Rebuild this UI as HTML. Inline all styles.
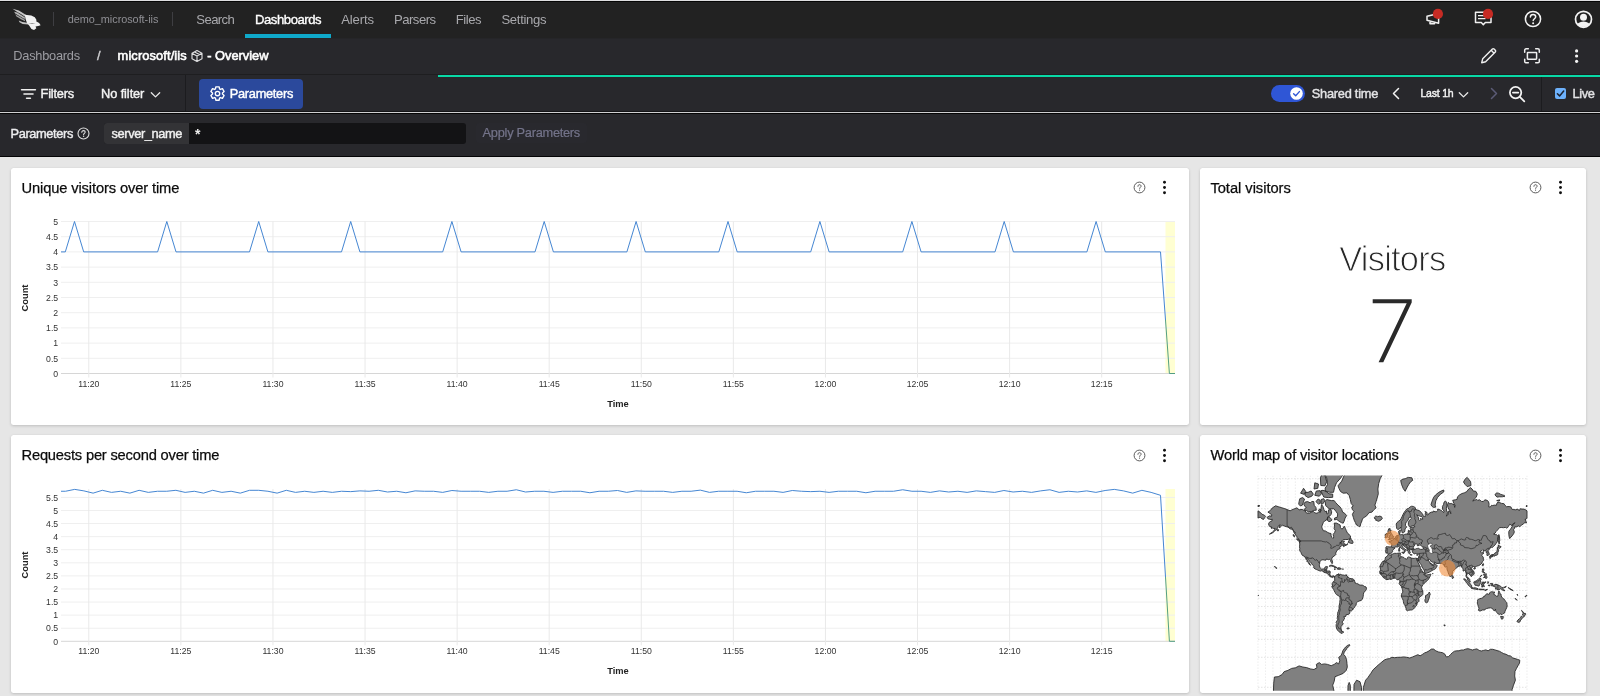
<!DOCTYPE html>
<html><head><meta charset="utf-8"><title>microsoft/iis - Overview</title>
<style>
*{box-sizing:border-box;margin:0;padding:0}
html,body{width:1600px;height:696px;overflow:hidden;background:#e6e6e6;font-family:"Liberation Sans", sans-serif;}
.abs,.t,.ic,.bar,.panel{position:absolute}
.t{white-space:nowrap;line-height:1;}
.bar{left:0;width:1600px}
.panel{background:#fff;border-radius:2.5px;box-shadow:0 1px 3px rgba(0,0,0,.17),0 0 1px rgba(0,0,0,.10)}
.ptitle{font-size:14.3px;color:#161616;letter-spacing:.1px}
svg text.tk{font-family:"Liberation Sans", sans-serif;font-size:8.7px;fill:#333}
svg text.ax{font-family:"Liberation Sans", sans-serif;font-size:9.3px;font-weight:bold;fill:#222}
.nav{font-size:13.2px;color:#a9a9ad;top:13px}
</style></head><body><div id="root" style="position:absolute;left:0;top:0;width:1600px;height:696px;will-change:transform">

<!-- ======= top nav ======= -->
<div class="bar" style="top:0;height:38px;background:#222222"></div>
<div class="bar" style="top:0;height:1px;background:#dedee0"></div>
<div class="bar" style="top:1px;height:1px;background:#060606"></div>
<div class="bar" style="top:38px;height:37px;background:#28282c"></div>
<div class="bar" style="top:38px;height:1px;background:#252528"></div>
<div class="bar" style="top:74px;height:1px;background:#1e1e20"></div>
<div class="bar" style="top:75px;height:37px;background:#28282c"></div>
<div class="bar" style="top:111px;height:1px;background:#151517"></div>
<div class="bar" style="top:112px;height:1px;background:#cfcfd1"></div>
<div class="bar" style="top:113px;height:44px;background:#28282c"></div>
<div class="bar" style="top:113px;height:1px;background:#050505"></div>
<div class="bar" style="top:156px;height:1px;background:#050506"></div>

<!-- falcon logo -->
<svg class="ic" style="left:8px;top:4px" width="40" height="30" viewBox="0 0 928 696">
<g fill="#f1f1f1">
<path d="M105 108 250 148 430 262 405 300 300 232 215 188Z" opacity=".8"/>
<path d="M140 182 215 200 395 312 385 348 265 278 170 222Z" opacity=".72"/>
<path d="M165 238 250 282 392 366 398 402 300 352 200 288Z" opacity=".62"/>
<path d="M250 382 335 420 485 440 472 474 340 466 268 422Z" opacity=".78"/>
<path d="M392 252 540 268 622 308 662 370 652 402 722 440 758 492 700 508 638 520 658 560 604 604 544 582 494 502 440 442 404 336Z"/>
</g>
<path d="M470 448 640 440 560 462Z" fill="#212123" opacity=".55"/>
</svg>
<div class="abs" style="left:53px;top:12px;width:1px;height:14px;background:#3e3e42"></div>
<div class="t" style="left:67.80px;top:14.27px;font-size:10.9px;font-weight:normal;color:#8f8f94;letter-spacing:-0.049px;">demo_microsoft-iis</div>
<div class="abs" style="left:172px;top:12px;width:1px;height:14px;background:#3e3e42"></div>

<div class="t" style="left:196.30px;top:12.51px;font-size:13.1px;font-weight:normal;color:#a9a9ad;letter-spacing:-0.583px;">Search</div>
<div class="t" style="left:255.00px;top:12.51px;font-size:13.1px;font-weight:normal;color:#ffffff;letter-spacing:-0.441px;-webkit-text-stroke:0.35px #ffffff;">Dashboards</div>
<div class="t" style="left:341.30px;top:12.51px;font-size:13.1px;font-weight:normal;color:#a9a9ad;letter-spacing:-0.164px;">Alerts</div>
<div class="t" style="left:394.00px;top:12.51px;font-size:13.1px;font-weight:normal;color:#a9a9ad;letter-spacing:-0.504px;">Parsers</div>
<div class="t" style="left:455.80px;top:12.51px;font-size:13.1px;font-weight:normal;color:#a9a9ad;letter-spacing:-0.491px;">Files</div>
<div class="t" style="left:501.40px;top:12.51px;font-size:13.1px;font-weight:normal;color:#a9a9ad;letter-spacing:-0.302px;">Settings</div>
<div class="abs" style="left:245px;top:34px;width:86px;height:4px;background:#0fa9ca"></div>

<!-- top-right icons -->
<svg class="ic" style="left:1424px;top:7px" width="22" height="22" viewBox="0 0 22 22">
<path d="M3 9.300 14.600 6.400v9.800L3 13.300z M6 14v2.700h4.500V15" fill="none" stroke="#f0f0f0" stroke-width="1.5" stroke-linejoin="round"/>
<circle cx="13.900" cy="6.900" r="5.100" fill="#c62b24"/></svg>
<svg class="ic" style="left:1472px;top:7px" width="24" height="22" viewBox="0 0 24 22">
<path d="M3.500 5.300h15.500v10.200h-5.700l-2 2.200-2-2.200H3.500z" fill="none" stroke="#f0f0f0" stroke-width="1.500" stroke-linejoin="round"/>
<path d="M6 8.600h10M6 11.600h7.500" stroke="#f0f0f0" stroke-width="1.300"/>
<circle cx="16" cy="6.900" r="5.100" fill="#c62b24"/></svg>
<svg class="ic" style="left:1523px;top:9px" width="20" height="20" viewBox="0 0 20 20">
<circle cx="10" cy="10" r="7.600" fill="none" stroke="#f4f4f4" stroke-width="1.500"/>
<path d="M7.400 8.100c0-1.600 1.200-2.600 2.700-2.600s2.600 1 2.600 2.300c0 1.900-2.500 2-2.500 3.800" fill="none" stroke="#f4f4f4" stroke-width="1.500" stroke-linecap="round"/><circle cx="10.150" cy="14.200" r="1" fill="#f4f4f4"/></svg>
<svg class="ic" style="left:1573px;top:9px" width="21" height="21" viewBox="0 0 21 21">
<defs><clipPath id="uc"><circle cx="10.500" cy="10.300" r="7.700"/></clipPath></defs>
<circle cx="10.500" cy="10.300" r="8" fill="none" stroke="#f4f4f4" stroke-width="1.700"/>
<circle cx="10.500" cy="8.200" r="3.500" fill="#f4f4f4"/>
<ellipse cx="10.500" cy="18.200" rx="7.200" ry="5.800" fill="#f4f4f4" clip-path="url(#uc)"/></svg>

<!-- ======= breadcrumb bar ======= -->
<div class="t" style="left:13.30px;top:50.16px;font-size:12.8px;font-weight:normal;color:#9d9da3;letter-spacing:-0.252px;">Dashboards</div>
<div class="t" style="left:96.90px;top:50.16px;font-size:12.8px;font-weight:normal;color:#cfcfd2;letter-spacing:0.137px;-webkit-text-stroke:0.4px #cfcfd2;">/</div>
<div class="t" style="left:117.60px;top:50.16px;font-size:12.8px;font-weight:normal;color:#ffffff;letter-spacing:0.127px;-webkit-text-stroke:0.6px #ffffff;">microsoft/iis</div>
<svg class="ic" style="left:190px;top:49px" width="14" height="14" viewBox="0 0 14 14"><path d="M7 1.500 12 4.200v5.600L7 12.500 2 9.800V4.200zM2 4.200 7 7l5-2.800M7 7v5.500M4.500 2.900l5 2.700" fill="none" stroke="#dedee0" stroke-width="1.150" stroke-linejoin="round"/></svg>
<div class="t" style="left:207.30px;top:50.16px;font-size:12.8px;font-weight:normal;color:#ffffff;letter-spacing:0.004px;-webkit-text-stroke:0.6px #ffffff;">- Overview</div>

<svg class="ic" style="left:1479px;top:46px" width="20" height="20" viewBox="0 0 20 20"><path d="M2.700 16.700l1-3.900L13.400 3.100c.5-.5 1.200-.5 1.700 0l1.200 1.200c.5.5.5 1.200 0 1.700L6.600 15.700zM12.200 4.300l2.900 2.900" fill="none" stroke="#f0f0f0" stroke-width="1.400" stroke-linejoin="round"/></svg>
<svg class="ic" style="left:1523px;top:47px" width="18" height="18" viewBox="0 0 18 18"><path d="M1.700 5.300V3.200c0-.8.600-1.400 1.400-1.400h2.200M12.700 1.800h2.200c.8 0 1.400.6 1.400 1.400v2.100M16.300 12.300v2.100c0 .8-.6 1.400-1.400 1.400h-2.200M5.300 15.800H3.100c-.8 0-1.400-.6-1.400-1.400v-2.100" fill="none" stroke="#f0f0f0" stroke-width="1.500" stroke-linecap="round" stroke-linejoin="round"/><rect x="4.400" y="5.400" width="9.200" height="6.800" rx=".6" fill="none" stroke="#f0f0f0" stroke-width="1.500"/></svg>
<svg class="ic" style="left:1574px;top:48px" width="6" height="16" viewBox="0 0 6 16"><circle cx="2.600" cy="2.900" r="1.600" fill="#f4f4f4"/><circle cx="2.600" cy="8" r="1.600" fill="#f4f4f4"/><circle cx="2.600" cy="13.300" r="1.600" fill="#f4f4f4"/></svg>

<!-- teal progress line -->
<div class="abs" style="left:438px;top:75px;width:1162px;height:2px;background:#08d8a6"></div>

<!-- ======= toolbar ======= -->
<svg class="ic" style="left:20px;top:88px" width="17" height="13" viewBox="0 0 17 13"><path d="M1.6 1.700h13.800M4 6h9M6.600 10.300h3.800" stroke="#f0f0f0" stroke-width="1.600" stroke-linecap="round"/></svg>
<div class="t" style="left:40.60px;top:88.16px;font-size:12.8px;font-weight:normal;color:#f4f4f4;letter-spacing:-0.206px;-webkit-text-stroke:0.4px #f4f4f4;">Filters</div>
<div class="t" style="left:101.00px;top:88.16px;font-size:12.8px;font-weight:normal;color:#f4f4f4;letter-spacing:-0.088px;-webkit-text-stroke:0.4px #f4f4f4;">No filter</div>
<svg class="ic" style="left:149.500px;top:90.500px" width="11" height="8" viewBox="0 0 11 8"><path d="M1.300 1.700 5.500 5.900 9.700 1.700" fill="none" stroke="#e8e8e8" stroke-width="1.300" stroke-linecap="round" stroke-linejoin="round"/></svg>
<div class="abs" style="left:185px;top:75px;width:1px;height:36px;background:#1c1c1f"></div>
<div class="abs" style="left:199px;top:78.500px;width:104px;height:30.500px;background:#2b499c;border-radius:4px"></div>
<svg class="ic" style="left:208.700px;top:85px" width="17" height="17" viewBox="0 0 17 17"><g fill="none" stroke="#fff" stroke-width="1.350" stroke-linejoin="round"><path d="M10.17 1.80 L6.83 1.80 L6.47 3.93 L5.56 4.45 L3.54 3.71 L1.87 6.60 L3.53 7.98 L3.53 9.02 L1.87 10.40 L3.54 13.29 L5.56 12.55 L6.47 13.07 L6.83 15.20 L10.17 15.20 L10.53 13.07 L11.44 12.55 L13.46 13.29 L15.13 10.40 L13.47 9.02 L13.47 7.98 L15.13 6.60 L13.46 3.71 L11.44 4.45 L10.53 3.93Z"/><circle cx="8.500" cy="8.500" r="2.200"/></g></svg>
<div class="t" style="left:229.80px;top:88.16px;font-size:12.8px;font-weight:normal;color:#ffffff;letter-spacing:-0.294px;-webkit-text-stroke:0.4px #ffffff;">Parameters</div>

<!-- toggle -->
<div class="abs" style="left:1271px;top:85px;width:34px;height:17px;border-radius:9px;background:#2f56d6"></div>
<svg class="ic" style="left:1289px;top:86px" width="15" height="15" viewBox="0 0 15 15"><circle cx="7.500" cy="7.500" r="6.300" fill="#fff"/><path d="M4.600 7.700 6.700 9.700 10.400 5.600" fill="none" stroke="#2f56d6" stroke-width="1.400" stroke-linecap="round" stroke-linejoin="round"/></svg>
<div class="t" style="left:1311.80px;top:88.16px;font-size:12.8px;font-weight:normal;color:#e4e4e6;letter-spacing:-0.255px;-webkit-text-stroke:0.4px #e4e4e6;">Shared time</div>
<svg class="ic" style="left:1391px;top:87px" width="10" height="13" viewBox="0 0 10 13"><path d="M7.500 1.500 2.500 6.500 7.500 11.500" fill="none" stroke="#f4f4f4" stroke-width="1.500" stroke-linecap="round" stroke-linejoin="round"/></svg>
<div class="t" style="left:1420.50px;top:88.31px;font-size:10.5px;font-weight:normal;color:#f4f4f4;letter-spacing:-0.222px;-webkit-text-stroke:0.4px #f4f4f4;">Last 1h</div>
<svg class="ic" style="left:1458px;top:90.500px" width="11" height="8" viewBox="0 0 11 8"><path d="M1.300 1.700 5.500 5.900 9.700 1.700" fill="none" stroke="#e8e8e8" stroke-width="1.300" stroke-linecap="round" stroke-linejoin="round"/></svg>
<svg class="ic" style="left:1489px;top:87px" width="10" height="13" viewBox="0 0 10 13"><path d="M2.500 1.500 7.500 6.500 2.500 11.500" fill="none" stroke="#5b5b76" stroke-width="1.500" stroke-linecap="round" stroke-linejoin="round"/></svg>
<svg class="ic" style="left:1508px;top:85px" width="18" height="18" viewBox="0 0 18 18"><circle cx="7.600" cy="7.600" r="5.700" fill="none" stroke="#f4f4f4" stroke-width="1.750"/><path d="M11.800 11.800 16.300 16.300M4.900 7.600h5.400" stroke="#f4f4f4" stroke-width="1.750" stroke-linecap="round"/></svg>
<div class="abs" style="left:1541px;top:77px;width:1px;height:34px;background:#1c1c1f"></div>
<div class="abs" style="left:1555px;top:88px;width:11px;height:11px;border-radius:2px;background:#6db1fb"></div>
<svg class="ic" style="left:1555px;top:88px" width="11" height="11" viewBox="0 0 11 11"><path d="M2.400 5.700 4.600 7.900 8.700 3" fill="none" stroke="#1c2230" stroke-width="1.500" stroke-linecap="round" stroke-linejoin="round"/></svg>
<div class="t" style="left:1572.60px;top:88.16px;font-size:12.8px;font-weight:normal;color:#e4e4e6;letter-spacing:-0.371px;-webkit-text-stroke:0.4px #e4e4e6;">Live</div>

<!-- ======= parameters bar ======= -->
<div class="t" style="left:10.50px;top:128.16px;font-size:12.8px;font-weight:normal;color:#ededef;letter-spacing:-0.364px;-webkit-text-stroke:0.4px #ededef;">Parameters</div>
<svg class="ic" style="left:77px;top:127px" width="13" height="13" viewBox="0 0 13 13"><circle cx="6.500" cy="6.500" r="5.500" fill="none" stroke="#e0e0e0" stroke-width="1.100"/><path d="M4.800 5.300c0-1 .8-1.700 1.700-1.700s1.700.6 1.700 1.500c0 1.200-1.600 1.300-1.600 2.400" fill="none" stroke="#e0e0e0" stroke-width="1.100" stroke-linecap="round"/><circle cx="6.600" cy="9.300" r=".7" fill="#e0e0e0"/></svg>
<div class="abs" style="left:104px;top:123px;width:362px;height:21px;border-radius:3px;background:#131315"></div>
<div class="abs" style="left:104px;top:123px;width:85px;height:21px;border-radius:3px 0 0 3px;background:#333336"></div>
<div class="t" style="left:111.50px;top:128.16px;font-size:12.8px;font-weight:normal;color:#f0f0f0;letter-spacing:-0.381px;-webkit-text-stroke:0.4px #f0f0f0;">server_name</div>
<div class="t" style="left:195px;top:127px;font-size:14px;color:#f0f0f0;font-weight:bold">*</div>
<div class="abs" style="left:476px;top:123px;width:111px;height:20px;border-radius:3px;background:#29292e"></div>
<div class="t" style="left:482.60px;top:127.26px;font-size:12.8px;font-weight:normal;color:#74748a;letter-spacing:-0.270px;-webkit-text-stroke:0.2px #74748a;">Apply Parameters</div>

<!-- ======= panels ======= -->
<div class="panel" style="left:11px;top:168px;width:1178px;height:257px"></div>
<div class="panel" style="left:1200px;top:168px;width:386px;height:257px"></div>
<div class="panel" style="left:11px;top:435px;width:1178px;height:258px"></div>
<div class="panel" style="left:1200px;top:435px;width:386px;height:258px"></div>

<div class="t" style="left:21.50px;top:180.55px;font-size:14.7px;font-weight:normal;color:#0c0c0c;letter-spacing:-0.125px;-webkit-text-stroke:0.25px #0c0c0c;">Unique visitors over time</div>
<div class="t" style="left:1210.40px;top:180.55px;font-size:14.7px;font-weight:normal;color:#0c0c0c;letter-spacing:-0.029px;-webkit-text-stroke:0.25px #0c0c0c;">Total visitors</div>
<div class="t" style="left:21.50px;top:448.35px;font-size:14.7px;font-weight:normal;color:#0c0c0c;letter-spacing:-0.192px;-webkit-text-stroke:0.25px #0c0c0c;">Requests per second over time</div>
<div class="t" style="left:1210.40px;top:448.35px;font-size:14.7px;font-weight:normal;color:#0c0c0c;letter-spacing:-0.109px;-webkit-text-stroke:0.25px #0c0c0c;">World map of visitor locations</div>
<svg class="ic" style="left:1132.8px;top:181.1px" width="13" height="13" viewBox="0 0 13 13"><circle cx="6.5" cy="6.5" r="5.4" fill="none" stroke="#4a4a4a" stroke-width="0.9"/><path d="M4.9 5.3c0-1 .7-1.6 1.6-1.6s1.6.6 1.6 1.4c0 1.1-1.5 1.2-1.5 2.3" fill="none" stroke="#4a4a4a" stroke-width="0.9" stroke-linecap="round"/><circle cx="6.55" cy="9.1" r=".6" fill="#4a4a4a"/></svg><svg class="ic" style="left:1161.7px;top:180.1px" width="5" height="15" viewBox="0 0 5 15"><circle cx="2.5" cy="2.2" r="1.45" fill="#111"/><circle cx="2.5" cy="7.5" r="1.45" fill="#111"/><circle cx="2.5" cy="12.8" r="1.45" fill="#111"/></svg>
<svg class="ic" style="left:1528.8px;top:181.1px" width="13" height="13" viewBox="0 0 13 13"><circle cx="6.5" cy="6.5" r="5.4" fill="none" stroke="#4a4a4a" stroke-width="0.9"/><path d="M4.9 5.3c0-1 .7-1.6 1.6-1.6s1.6.6 1.6 1.4c0 1.1-1.5 1.2-1.5 2.3" fill="none" stroke="#4a4a4a" stroke-width="0.9" stroke-linecap="round"/><circle cx="6.55" cy="9.1" r=".6" fill="#4a4a4a"/></svg><svg class="ic" style="left:1557.7px;top:180.1px" width="5" height="15" viewBox="0 0 5 15"><circle cx="2.5" cy="2.2" r="1.45" fill="#111"/><circle cx="2.5" cy="7.5" r="1.45" fill="#111"/><circle cx="2.5" cy="12.8" r="1.45" fill="#111"/></svg>
<svg class="ic" style="left:1132.8px;top:448.9px" width="13" height="13" viewBox="0 0 13 13"><circle cx="6.5" cy="6.5" r="5.4" fill="none" stroke="#4a4a4a" stroke-width="0.9"/><path d="M4.9 5.3c0-1 .7-1.6 1.6-1.6s1.6.6 1.6 1.4c0 1.1-1.5 1.2-1.5 2.3" fill="none" stroke="#4a4a4a" stroke-width="0.9" stroke-linecap="round"/><circle cx="6.55" cy="9.1" r=".6" fill="#4a4a4a"/></svg><svg class="ic" style="left:1161.7px;top:447.9px" width="5" height="15" viewBox="0 0 5 15"><circle cx="2.5" cy="2.2" r="1.45" fill="#111"/><circle cx="2.5" cy="7.5" r="1.45" fill="#111"/><circle cx="2.5" cy="12.8" r="1.45" fill="#111"/></svg>
<svg class="ic" style="left:1528.8px;top:448.9px" width="13" height="13" viewBox="0 0 13 13"><circle cx="6.5" cy="6.5" r="5.4" fill="none" stroke="#4a4a4a" stroke-width="0.9"/><path d="M4.9 5.3c0-1 .7-1.6 1.6-1.6s1.6.6 1.6 1.4c0 1.1-1.5 1.2-1.5 2.3" fill="none" stroke="#4a4a4a" stroke-width="0.9" stroke-linecap="round"/><circle cx="6.55" cy="9.1" r=".6" fill="#4a4a4a"/></svg><svg class="ic" style="left:1557.7px;top:447.9px" width="5" height="15" viewBox="0 0 5 15"><circle cx="2.5" cy="2.2" r="1.45" fill="#111"/><circle cx="2.5" cy="7.5" r="1.45" fill="#111"/><circle cx="2.5" cy="12.8" r="1.45" fill="#111"/></svg>

<svg class="abs" style="left:0;top:0" width="1600" height="696" viewBox="0 0 1600 696">
<rect x="1165.5" y="221.5" width="9.5" height="152.0" fill="#ffffd2"/>
<line x1="61.0" y1="373.50" x2="1175.0" y2="373.50" stroke="#d6d6d6" stroke-width="1"/>
<text x="58.2" y="376.70" text-anchor="end" class="tk">0</text>
<line x1="61.0" y1="358.30" x2="1175.0" y2="358.30" stroke="#efefef" stroke-width="1"/>
<text x="58.2" y="361.50" text-anchor="end" class="tk">0.5</text>
<line x1="61.0" y1="343.10" x2="1175.0" y2="343.10" stroke="#efefef" stroke-width="1"/>
<text x="58.2" y="346.30" text-anchor="end" class="tk">1</text>
<line x1="61.0" y1="327.90" x2="1175.0" y2="327.90" stroke="#efefef" stroke-width="1"/>
<text x="58.2" y="331.10" text-anchor="end" class="tk">1.5</text>
<line x1="61.0" y1="312.70" x2="1175.0" y2="312.70" stroke="#efefef" stroke-width="1"/>
<text x="58.2" y="315.90" text-anchor="end" class="tk">2</text>
<line x1="61.0" y1="297.50" x2="1175.0" y2="297.50" stroke="#efefef" stroke-width="1"/>
<text x="58.2" y="300.70" text-anchor="end" class="tk">2.5</text>
<line x1="61.0" y1="282.30" x2="1175.0" y2="282.30" stroke="#efefef" stroke-width="1"/>
<text x="58.2" y="285.50" text-anchor="end" class="tk">3</text>
<line x1="61.0" y1="267.10" x2="1175.0" y2="267.10" stroke="#efefef" stroke-width="1"/>
<text x="58.2" y="270.30" text-anchor="end" class="tk">3.5</text>
<line x1="61.0" y1="251.90" x2="1175.0" y2="251.90" stroke="#efefef" stroke-width="1"/>
<text x="58.2" y="255.10" text-anchor="end" class="tk">4</text>
<line x1="61.0" y1="236.70" x2="1175.0" y2="236.70" stroke="#efefef" stroke-width="1"/>
<text x="58.2" y="239.90" text-anchor="end" class="tk">4.5</text>
<line x1="61.0" y1="221.50" x2="1175.0" y2="221.50" stroke="#efefef" stroke-width="1"/>
<text x="58.2" y="224.70" text-anchor="end" class="tk">5</text>
<line x1="88.80" y1="221.5" x2="88.80" y2="377.5" stroke="#e9e9e9" stroke-width="1"/>
<text x="88.80" y="387.2" text-anchor="middle" class="tk">11:20</text>
<line x1="180.88" y1="221.5" x2="180.88" y2="377.5" stroke="#e9e9e9" stroke-width="1"/>
<text x="180.88" y="387.2" text-anchor="middle" class="tk">11:25</text>
<line x1="272.96" y1="221.5" x2="272.96" y2="377.5" stroke="#e9e9e9" stroke-width="1"/>
<text x="272.96" y="387.2" text-anchor="middle" class="tk">11:30</text>
<line x1="365.04" y1="221.5" x2="365.04" y2="377.5" stroke="#e9e9e9" stroke-width="1"/>
<text x="365.04" y="387.2" text-anchor="middle" class="tk">11:35</text>
<line x1="457.12" y1="221.5" x2="457.12" y2="377.5" stroke="#e9e9e9" stroke-width="1"/>
<text x="457.12" y="387.2" text-anchor="middle" class="tk">11:40</text>
<line x1="549.20" y1="221.5" x2="549.20" y2="377.5" stroke="#e9e9e9" stroke-width="1"/>
<text x="549.20" y="387.2" text-anchor="middle" class="tk">11:45</text>
<line x1="641.28" y1="221.5" x2="641.28" y2="377.5" stroke="#e9e9e9" stroke-width="1"/>
<text x="641.28" y="387.2" text-anchor="middle" class="tk">11:50</text>
<line x1="733.36" y1="221.5" x2="733.36" y2="377.5" stroke="#e9e9e9" stroke-width="1"/>
<text x="733.36" y="387.2" text-anchor="middle" class="tk">11:55</text>
<line x1="825.44" y1="221.5" x2="825.44" y2="377.5" stroke="#e9e9e9" stroke-width="1"/>
<text x="825.44" y="387.2" text-anchor="middle" class="tk">12:00</text>
<line x1="917.52" y1="221.5" x2="917.52" y2="377.5" stroke="#e9e9e9" stroke-width="1"/>
<text x="917.52" y="387.2" text-anchor="middle" class="tk">12:05</text>
<line x1="1009.60" y1="221.5" x2="1009.60" y2="377.5" stroke="#e9e9e9" stroke-width="1"/>
<text x="1009.60" y="387.2" text-anchor="middle" class="tk">12:10</text>
<line x1="1101.68" y1="221.5" x2="1101.68" y2="377.5" stroke="#e9e9e9" stroke-width="1"/>
<text x="1101.68" y="387.2" text-anchor="middle" class="tk">12:15</text>
<path d="M61.00,251.90 L65.30,251.90 L74.50,221.50 L83.70,251.90 L157.60,251.90 L166.80,221.50 L176.00,251.90 L249.50,251.90 L258.70,221.50 L267.90,251.90 L341.50,251.90 L350.70,221.50 L359.90,251.90 L442.70,251.90 L451.90,221.50 L461.10,251.90 L535.00,251.90 L544.20,221.50 L553.40,251.90 L626.90,251.90 L636.10,221.50 L645.30,251.90 L718.80,251.90 L728.00,221.50 L737.20,251.90 L810.70,251.90 L819.90,221.50 L829.10,251.90 L902.70,251.90 L911.90,221.50 L921.10,251.90 L995.00,251.90 L1004.20,221.50 L1013.40,251.90 L1086.90,251.90 L1096.10,221.50 L1105.30,251.90 L1160.50,251.90" fill="none" stroke="#3b80d0" stroke-width="0.95" stroke-linejoin="round"/>
<path d="M1160.5,251.90 L1165.5,320.00" fill="none" stroke="#3b80d0" stroke-width="0.95"/>
<path d="M1165.5,320.00 L1169.4,373.50 L1175.0,373.50" fill="none" stroke="#4a9a7e" stroke-width="0.95"/>
<text transform="translate(27.6,298) rotate(-90)" text-anchor="middle" class="ax">Count</text>
<text x="618" y="407.3" text-anchor="middle" class="ax">Time</text>
<rect x="1165.5" y="489.0" width="9.5" height="152.29999999999995" fill="#ffffd2"/>
<line x1="61.0" y1="641.30" x2="1175.0" y2="641.30" stroke="#d6d6d6" stroke-width="1"/>
<text x="58.2" y="644.50" text-anchor="end" class="tk">0</text>
<line x1="61.0" y1="628.22" x2="1175.0" y2="628.22" stroke="#efefef" stroke-width="1"/>
<text x="58.2" y="631.42" text-anchor="end" class="tk">0.5</text>
<line x1="61.0" y1="615.14" x2="1175.0" y2="615.14" stroke="#efefef" stroke-width="1"/>
<text x="58.2" y="618.34" text-anchor="end" class="tk">1</text>
<line x1="61.0" y1="602.05" x2="1175.0" y2="602.05" stroke="#efefef" stroke-width="1"/>
<text x="58.2" y="605.25" text-anchor="end" class="tk">1.5</text>
<line x1="61.0" y1="588.97" x2="1175.0" y2="588.97" stroke="#efefef" stroke-width="1"/>
<text x="58.2" y="592.17" text-anchor="end" class="tk">2</text>
<line x1="61.0" y1="575.89" x2="1175.0" y2="575.89" stroke="#efefef" stroke-width="1"/>
<text x="58.2" y="579.09" text-anchor="end" class="tk">2.5</text>
<line x1="61.0" y1="562.81" x2="1175.0" y2="562.81" stroke="#efefef" stroke-width="1"/>
<text x="58.2" y="566.01" text-anchor="end" class="tk">3</text>
<line x1="61.0" y1="549.73" x2="1175.0" y2="549.73" stroke="#efefef" stroke-width="1"/>
<text x="58.2" y="552.93" text-anchor="end" class="tk">3.5</text>
<line x1="61.0" y1="536.65" x2="1175.0" y2="536.65" stroke="#efefef" stroke-width="1"/>
<text x="58.2" y="539.85" text-anchor="end" class="tk">4</text>
<line x1="61.0" y1="523.56" x2="1175.0" y2="523.56" stroke="#efefef" stroke-width="1"/>
<text x="58.2" y="526.76" text-anchor="end" class="tk">4.5</text>
<line x1="61.0" y1="510.48" x2="1175.0" y2="510.48" stroke="#efefef" stroke-width="1"/>
<text x="58.2" y="513.68" text-anchor="end" class="tk">5</text>
<line x1="61.0" y1="497.40" x2="1175.0" y2="497.40" stroke="#efefef" stroke-width="1"/>
<text x="58.2" y="500.60" text-anchor="end" class="tk">5.5</text>
<line x1="88.80" y1="489.0" x2="88.80" y2="645.3" stroke="#e9e9e9" stroke-width="1"/>
<text x="88.80" y="654.4" text-anchor="middle" class="tk">11:20</text>
<line x1="180.88" y1="489.0" x2="180.88" y2="645.3" stroke="#e9e9e9" stroke-width="1"/>
<text x="180.88" y="654.4" text-anchor="middle" class="tk">11:25</text>
<line x1="272.96" y1="489.0" x2="272.96" y2="645.3" stroke="#e9e9e9" stroke-width="1"/>
<text x="272.96" y="654.4" text-anchor="middle" class="tk">11:30</text>
<line x1="365.04" y1="489.0" x2="365.04" y2="645.3" stroke="#e9e9e9" stroke-width="1"/>
<text x="365.04" y="654.4" text-anchor="middle" class="tk">11:35</text>
<line x1="457.12" y1="489.0" x2="457.12" y2="645.3" stroke="#e9e9e9" stroke-width="1"/>
<text x="457.12" y="654.4" text-anchor="middle" class="tk">11:40</text>
<line x1="549.20" y1="489.0" x2="549.20" y2="645.3" stroke="#e9e9e9" stroke-width="1"/>
<text x="549.20" y="654.4" text-anchor="middle" class="tk">11:45</text>
<line x1="641.28" y1="489.0" x2="641.28" y2="645.3" stroke="#e9e9e9" stroke-width="1"/>
<text x="641.28" y="654.4" text-anchor="middle" class="tk">11:50</text>
<line x1="733.36" y1="489.0" x2="733.36" y2="645.3" stroke="#e9e9e9" stroke-width="1"/>
<text x="733.36" y="654.4" text-anchor="middle" class="tk">11:55</text>
<line x1="825.44" y1="489.0" x2="825.44" y2="645.3" stroke="#e9e9e9" stroke-width="1"/>
<text x="825.44" y="654.4" text-anchor="middle" class="tk">12:00</text>
<line x1="917.52" y1="489.0" x2="917.52" y2="645.3" stroke="#e9e9e9" stroke-width="1"/>
<text x="917.52" y="654.4" text-anchor="middle" class="tk">12:05</text>
<line x1="1009.60" y1="489.0" x2="1009.60" y2="645.3" stroke="#e9e9e9" stroke-width="1"/>
<text x="1009.60" y="654.4" text-anchor="middle" class="tk">12:10</text>
<line x1="1101.68" y1="489.0" x2="1101.68" y2="645.3" stroke="#e9e9e9" stroke-width="1"/>
<text x="1101.68" y="654.4" text-anchor="middle" class="tk">12:15</text>
<path d="M61.00,491.25 L65.50,491.25 L74.70,489.38 L83.90,490.88 L93.10,493.13 L102.30,490.31 L111.50,492.38 L120.70,491.25 L129.90,493.13 L139.10,490.31 L148.30,492.38 L157.50,491.25 L166.70,491.25 L175.90,490.31 L185.10,492.38 L194.30,491.25 L203.50,493.13 L212.70,490.31 L221.90,492.38 L231.10,491.25 L240.30,493.13 L249.50,490.31 L258.70,490.31 L267.90,491.25 L277.10,493.13 L286.30,490.31 L295.50,492.38 L304.70,491.25 L313.90,492.38 L323.10,491.25 L332.30,492.38 L341.50,491.25 L350.70,491.63 L359.90,490.88 L369.10,491.25 L378.30,490.31 L387.50,492.00 L396.70,491.25 L405.90,492.75 L415.10,490.88 L424.30,491.25 L433.50,491.25 L442.70,492.38 L451.90,490.50 L461.10,491.25 L470.30,491.25 L479.50,491.25 L488.70,492.38 L497.90,491.25 L507.10,491.25 L516.30,489.75 L525.50,492.00 L534.70,491.25 L543.90,491.25 L553.10,492.38 L562.30,491.25 L571.50,491.25 L580.70,491.25 L589.90,492.75 L599.10,491.25 L608.30,491.25 L617.50,490.50 L626.70,492.38 L635.90,490.88 L645.10,491.25 L654.30,491.25 L663.50,491.25 L672.70,492.38 L681.90,491.25 L691.10,491.25 L700.30,490.13 L709.50,492.38 L718.70,491.25 L727.90,491.25 L737.10,491.25 L746.30,492.75 L755.50,491.25 L764.70,491.25 L773.90,491.25 L783.10,492.38 L792.30,490.50 L801.50,491.25 L810.70,491.63 L819.90,491.25 L829.10,492.38 L838.30,491.25 L847.50,491.25 L856.70,491.25 L865.90,492.75 L875.10,491.25 L884.30,491.25 L893.50,491.25 L902.70,489.75 L911.90,491.25 L921.10,491.25 L930.30,492.38 L939.50,490.88 L948.70,492.00 L957.90,491.25 L967.10,492.38 L976.30,490.88 L985.50,491.63 L994.70,492.38 L1003.90,490.50 L1013.10,492.00 L1022.30,491.25 L1031.50,492.38 L1040.70,490.88 L1049.90,489.75 L1059.10,492.38 L1068.30,491.25 L1077.50,492.00 L1086.70,490.88 L1095.90,492.38 L1105.10,490.50 L1114.30,489.38 L1123.50,490.88 L1132.70,493.13 L1141.90,490.31 L1151.10,492.38 L1160.50,495.30" fill="none" stroke="#3b80d0" stroke-width="0.95" stroke-linejoin="round"/>
<path d="M1160.5,495.3 L1165.5,577.06" fill="none" stroke="#3b80d0" stroke-width="0.95"/>
<path d="M1165.5,577.06 L1169.4,641.30 L1175.0,641.30" fill="none" stroke="#4a9a7e" stroke-width="0.95"/>
<text transform="translate(27.6,565) rotate(-90)" text-anchor="middle" class="ax">Count</text>
<text x="618" y="674.3" text-anchor="middle" class="ax">Time</text>
<!-- big number -->
<text x="1339.3" y="270.9" textLength="106.8" lengthAdjust="spacing" font-family='"Liberation Sans", sans-serif' font-size="34.4" fill="#262626" stroke="#fff" stroke-width="1">Visitors</text>
<path d="M1372.700 299.200H1411.700V302.600L1383.300 362.200H1378.600L1406.700 303.200H1372.700Z" fill="#2a2a2a"/>
<defs><clipPath id="mapclip"><rect x="1257.0" y="475.5" width="271.0" height="215.20000000000005"/></clipPath></defs>
<g clip-path="url(#mapclip)">
<path d="M1258.00,475.5V690.7 M1265.47,475.5V690.7 M1272.94,475.5V690.7 M1280.42,475.5V690.7 M1287.89,475.5V690.7 M1295.36,475.5V690.7 M1302.83,475.5V690.7 M1310.31,475.5V690.7 M1317.78,475.5V690.7 M1325.25,475.5V690.7 M1332.72,475.5V690.7 M1340.19,475.5V690.7 M1347.67,475.5V690.7 M1355.14,475.5V690.7 M1362.61,475.5V690.7 M1370.08,475.5V690.7 M1377.56,475.5V690.7 M1385.03,475.5V690.7 M1392.50,475.5V690.7 M1399.97,475.5V690.7 M1407.44,475.5V690.7 M1414.92,475.5V690.7 M1422.39,475.5V690.7 M1429.86,475.5V690.7 M1437.33,475.5V690.7 M1444.81,475.5V690.7 M1452.28,475.5V690.7 M1459.75,475.5V690.7 M1467.22,475.5V690.7 M1474.69,475.5V690.7 M1482.17,475.5V690.7 M1489.64,475.5V690.7 M1497.11,475.5V690.7 M1504.58,475.5V690.7 M1512.06,475.5V690.7 M1519.53,475.5V690.7 M1527.00,475.5V690.7" fill="none" stroke="#e4e4e4" stroke-width="0.7" stroke-dasharray="1.4 1.6"/>
<path d="M1258.0,687.30H1527.0 M1258.0,657.30H1527.0 M1258.0,639.38H1527.0 M1258.0,626.27H1527.0 M1258.0,615.66H1527.0 M1258.0,606.52H1527.0 M1258.0,598.26H1527.0 M1258.0,590.51H1527.0 M1258.0,583.00H1527.0 M1258.0,575.49H1527.0 M1258.0,567.74H1527.0 M1258.0,559.48H1527.0 M1258.0,550.34H1527.0 M1258.0,539.73H1527.0 M1258.0,526.62H1527.0 M1258.0,508.70H1527.0 M1258.0,478.70H1527.0" fill="none" stroke="#dcdcdc" stroke-width="0.8" stroke-dasharray="1.5 1.5"/>
<path d="M1267.0,517.4L1269.6,515.8L1271.5,516.3L1271.8,514.8L1270.0,513.5L1267.9,512.1L1270.7,510.2L1272.2,508.0L1275.6,505.8L1278.9,506.9L1281.9,507.8L1284.9,508.7L1287.1,509.6L1290.1,510.8L1291.6,510.0L1294.6,508.7L1296.9,507.8L1299.1,509.8L1302.1,509.4L1305.1,511.0L1306.6,513.1L1309.6,513.1L1311.4,512.3L1313.3,511.3L1314.8,512.9L1317.0,513.3L1318.9,511.9L1320.4,512.5L1320.8,509.8L1321.5,504.6L1323.0,506.5L1323.8,509.4L1324.9,511.7L1326.4,511.0L1326.7,513.7L1327.9,513.9L1328.6,509.8L1330.9,509.6L1331.6,511.7L1331.2,514.3L1329.7,516.1L1328.2,516.3L1327.5,518.0L1326.7,519.9L1324.9,520.7L1323.4,522.4L1322.3,525.1L1321.7,526.9L1322.3,528.5L1323.4,530.8L1325.2,530.9L1327.5,532.3L1329.0,533.1L1331.0,533.5L1331.1,535.9L1331.8,537.4L1332.6,538.2L1333.6,538.0L1333.6,536.4L1333.2,534.4L1334.6,532.5L1335.3,530.6L1334.1,528.5L1334.6,526.2L1334.2,523.1L1336.5,523.1L1338.7,524.2L1340.2,525.1L1340.5,527.7L1341.7,529.0L1343.0,528.5L1343.7,526.9L1344.3,526.2L1345.4,528.4L1346.2,530.4L1347.3,532.8L1348.8,534.1L1349.9,535.4L1350.8,537.0L1349.9,538.1L1348.0,539.5L1345.8,539.5L1343.2,539.6L1342.1,540.7L1340.7,542.0L1339.6,543.2L1340.9,542.2L1342.6,541.0L1344.5,541.1L1343.7,542.2L1344.2,543.8L1345.2,544.3L1346.7,544.5L1347.7,543.6L1347.7,544.3L1346.5,545.1L1345.0,545.7L1343.5,546.7L1343.1,545.9L1344.3,544.8L1342.4,545.3L1341.3,546.0L1340.0,546.7L1339.7,548.0L1340.2,548.6L1339.1,549.0L1337.4,549.7L1337.0,550.8L1336.2,551.9L1335.7,553.2L1335.9,554.5L1335.2,555.3L1334.0,556.0L1333.1,556.9L1332.0,557.7L1331.7,559.1L1332.3,560.9L1332.6,562.3L1332.3,563.5L1331.8,563.4L1331.3,562.4L1330.7,561.4L1330.7,560.3L1329.7,559.4L1328.7,559.7L1327.1,559.2L1326.0,559.2L1325.8,560.2L1324.5,560.1L1323.0,559.7L1321.7,560.0L1320.4,560.9L1319.7,561.9L1319.8,563.0L1319.4,564.5L1319.4,565.9L1319.9,567.3L1320.6,568.4L1321.7,569.2L1323.4,568.9L1324.5,568.5L1324.9,567.4L1325.2,566.9L1326.7,566.5L1327.6,566.7L1327.1,567.9L1326.9,569.1L1326.5,569.9L1326.1,571.0L1326.9,571.0L1328.2,571.0L1329.5,571.0L1330.3,571.7L1330.0,573.2L1330.0,574.6L1330.5,575.5L1331.1,576.1L1332.0,576.4L1332.9,575.8L1333.8,575.9L1334.7,576.5L1334.3,577.5L1333.9,576.8L1333.1,576.2L1332.4,576.8L1332.7,577.4L1332.0,577.5L1331.2,576.9L1330.5,576.8L1330.0,576.5L1329.0,575.6L1328.4,574.8L1327.3,573.3L1326.4,573.0L1325.2,572.7L1324.1,572.4L1323.0,571.4L1321.9,570.7L1320.4,571.1L1318.9,570.6L1317.8,570.1L1316.4,569.5L1315.2,569.0L1314.0,568.1L1313.6,567.3L1313.8,566.3L1313.0,565.2L1311.9,564.0L1310.8,563.1L1310.8,562.3L1309.9,561.4L1308.8,560.4L1308.1,559.3L1307.9,558.4L1306.7,557.9L1306.8,559.1L1307.7,560.3L1308.2,561.4L1309.1,562.5L1309.7,563.9L1310.7,565.2L1310.2,565.3L1309.2,564.2L1308.7,563.1L1307.7,562.2L1306.9,561.4L1307.2,560.7L1306.2,559.6L1305.7,558.5L1305.0,557.3L1304.0,556.0L1302.5,555.5L1301.5,553.9L1301.0,552.5L1300.1,551.3L1299.6,549.9L1299.8,548.4L1299.5,546.8L1299.8,544.0L1299.3,541.6L1300.6,541.8L1300.7,540.9L1299.5,539.7L1298.0,538.7L1297.1,537.7L1296.9,536.4L1295.7,535.4L1295.1,533.8L1294.0,532.8L1293.5,531.2L1292.4,529.2L1290.7,529.1L1289.5,528.4L1288.0,527.1L1286.0,526.6L1284.2,526.0L1282.4,525.1L1281.4,526.2L1280.4,527.1L1279.1,527.7L1279.4,525.9L1280.4,524.8L1279.1,525.1L1278.3,526.3L1277.6,527.7L1277.2,528.8L1275.8,529.9L1274.2,531.6L1272.6,532.8L1271.0,533.6L1269.4,534.2L1270.6,533.3L1272.2,532.3L1273.8,530.9L1274.8,529.2L1275.1,528.4L1273.8,528.5L1272.6,528.1L1271.5,528.5L1271.5,526.9L1270.1,526.9L1269.0,525.4L1268.5,523.9L1269.4,522.2L1270.3,521.6L1272.0,520.9L1272.3,519.2L1270.9,519.6L1269.4,519.2L1268.1,518.9L1267.0,517.4Z M1338.0,485.8L1341.7,481.2L1343.9,476.0L1347.7,469.1L1355.1,466.3L1361.1,461.5L1368.6,459.5L1374.6,465.8L1379.0,471.2L1383.5,472.7L1380.2,478.7L1378.7,483.6L1377.9,489.0L1378.3,493.8L1377.2,497.9L1376.1,501.6L1374.9,505.1L1376.1,507.8L1373.8,509.8L1372.0,512.1L1369.0,512.7L1366.7,515.8L1364.5,517.3L1362.6,518.5L1361.9,520.9L1360.7,523.9L1360.2,526.3L1359.2,526.8L1358.1,525.6L1356.4,524.9L1355.4,522.6L1354.2,520.2L1353.3,517.3L1352.4,514.3L1354.0,511.3L1352.5,509.8L1351.7,507.1L1353.3,506.0L1351.2,503.6L1350.3,499.5L1349.2,495.6L1346.9,492.9L1343.2,493.2L1340.6,491.6L1339.1,488.7L1338.0,485.8Z M1346.6,515.6L1345.1,518.1L1344.2,521.1L1343.2,523.2L1341.3,522.6L1339.1,521.3L1336.8,519.4L1334.4,519.9L1334.6,518.0L1337.2,517.3L1337.7,513.9L1335.9,511.3L1333.8,508.7L1331.6,508.9L1329.1,508.7L1327.5,507.4L1325.6,505.3L1325.2,501.6L1326.7,499.5L1329.0,500.1L1331.6,500.6L1334.2,500.6L1335.7,502.6L1338.0,505.1L1340.0,506.9L1341.7,509.4L1342.6,512.1L1344.7,513.3L1346.6,515.6Z M1304.7,510.4L1306.9,510.8L1308.4,511.9L1311.8,511.5L1313.7,510.4L1316.3,510.2L1315.9,507.4L1314.2,505.3L1313.8,501.6L1311.8,501.4L1310.3,502.9L1307.7,501.6L1305.1,502.1L1303.7,504.1L1304.7,506.0L1306.2,507.6L1304.7,508.7L1304.7,510.4Z M1298.7,504.1L1300.4,506.0L1302.2,505.3L1303.4,502.4L1304.5,499.0L1302.5,497.6L1299.8,498.7L1299.1,501.6L1298.7,504.1Z M1327.5,517.6L1329.0,516.7L1330.1,517.6L1332.0,519.9L1330.9,521.1L1329.0,521.6L1327.5,520.6L1327.5,517.6Z M1315.9,501.6L1318.5,504.1L1320.2,503.4L1320.2,500.3L1318.2,499.0L1315.9,501.6Z M1321.1,503.6L1322.6,504.1L1324.9,500.8L1323.8,498.7L1321.1,499.5L1321.1,503.6Z M1318.2,510.4L1320.0,511.7L1321.1,510.4L1320.0,508.9L1318.2,510.4Z M1305.1,495.6L1308.1,497.6L1311.8,496.2L1313.3,494.1L1311.1,491.0L1308.1,492.3L1305.1,492.6L1305.1,495.6Z M1314.8,495.3L1319.3,496.2L1321.5,493.8L1320.0,490.7L1316.3,491.0L1314.8,495.3Z M1320.8,490.7L1323.8,497.1L1328.2,497.6L1332.7,497.3L1332.7,494.1L1329.0,493.8L1326.0,491.3L1323.0,490.3L1320.8,490.7Z M1325.2,491.0L1329.7,492.3L1333.5,492.3L1334.6,487.3L1336.5,482.8L1340.9,477.8L1344.7,472.2L1346.2,465.8L1340.2,462.1L1332.7,462.1L1326.7,468.0L1323.8,473.2L1326.7,477.8L1327.5,484.7L1325.2,488.0L1325.2,491.0Z M1320.8,485.5L1324.9,485.8L1326.7,481.6L1325.2,476.5L1322.3,473.2L1320.4,477.8L1320.8,485.5Z M1300.6,493.2L1304.3,494.4L1305.8,491.6L1303.6,488.3L1300.6,493.2Z M1314.0,489.0L1317.8,488.3L1318.5,484.0L1314.8,482.8L1314.0,489.0Z M1348.2,542.3L1350.7,543.3L1352.7,543.4L1353.1,542.3L1352.4,540.5L1351.0,539.8L1350.9,538.0L1349.8,538.8L1348.9,540.9L1348.2,542.3Z M1296.6,538.8L1298.7,539.4L1300.2,541.4L1299.1,541.3L1297.2,540.0L1296.6,538.8Z M1293.1,534.6L1294.1,535.0L1294.5,537.0L1293.4,536.1L1293.1,534.6Z M1277.1,529.7L1278.7,529.7L1278.3,530.9L1277.1,530.6L1277.1,529.7Z M1329.1,566.2L1330.5,565.3L1332.0,565.2L1333.5,565.7L1335.0,566.5L1336.2,567.2L1337.1,567.6L1334.5,567.9L1334.7,567.3L1333.5,566.5L1331.6,566.1L1330.1,566.1L1329.1,566.2Z M1336.9,568.9L1338.0,567.8L1339.4,567.8L1340.6,568.3L1341.4,568.9L1339.8,569.2L1339.1,569.6L1338.3,569.2L1336.9,568.9Z M1334.0,569.0L1335.5,569.2L1334.8,569.5L1334.0,569.0Z M1342.3,568.9L1343.4,569.1L1342.8,569.4L1342.3,568.9Z M1374.3,517.4L1375.8,516.0L1377.6,516.7L1379.8,516.1L1381.5,516.7L1382.3,518.5L1381.1,519.9L1378.7,521.3L1376.8,520.6L1375.6,520.2L1376.1,519.2L1374.6,518.7L1374.3,517.4Z M1334.7,576.5L1335.5,576.2L1336.1,575.1L1336.8,574.7L1338.0,574.4L1338.9,573.7L1339.3,574.1L1338.8,574.6L1339.1,575.3L1339.4,575.9L1339.3,574.8L1340.2,574.3L1341.3,574.5L1341.5,575.0L1343.2,575.0L1344.5,575.3L1345.8,575.0L1346.5,575.5L1347.1,576.0L1347.7,576.6L1348.8,577.8L1349.9,578.5L1351.4,578.6L1352.3,578.7L1353.4,579.3L1354.2,579.9L1354.6,581.3L1355.1,582.3L1354.9,583.0L1356.2,583.2L1356.6,583.7L1357.9,583.8L1359.2,584.8L1360.7,585.1L1362.2,585.1L1363.7,585.8L1364.7,586.6L1366.0,586.9L1366.5,588.2L1366.3,589.5L1365.4,590.7L1364.5,591.9L1363.7,592.8L1363.4,594.3L1363.2,596.4L1362.8,597.9L1362.0,599.5L1361.2,600.6L1360.0,600.7L1358.9,601.2L1357.8,601.6L1356.6,602.6L1356.2,603.8L1356.1,605.1L1355.1,606.3L1354.4,607.6L1353.5,608.5L1352.5,610.0L1351.5,610.9L1350.4,610.9L1349.3,610.4L1348.9,610.0L1349.7,611.2L1349.9,612.1L1349.5,613.7L1348.0,614.5L1346.2,614.6L1345.9,616.3L1344.8,616.7L1343.9,616.5L1344.2,617.9L1344.9,618.4L1343.9,619.1L1343.6,620.5L1342.6,621.1L1342.1,622.0L1342.6,622.9L1343.3,623.8L1342.2,625.1L1341.1,626.6L1340.9,628.2L1341.4,629.0L1341.2,629.6L1341.8,630.9L1343.0,631.9L1343.8,632.0L1342.8,632.5L1342.1,633.5L1340.6,632.9L1339.1,631.8L1337.7,630.4L1336.8,629.0L1336.2,626.9L1336.1,624.7L1336.8,623.7L1336.1,622.4L1337.0,620.9L1337.6,619.5L1337.2,618.5L1337.4,617.1L1337.7,615.5L1337.6,613.7L1337.6,612.9L1338.2,611.6L1338.8,609.9L1339.1,608.3L1339.0,606.5L1339.2,605.2L1339.6,604.0L1339.8,602.3L1339.9,601.0L1340.1,599.5L1340.0,597.9L1339.9,596.9L1339.1,596.2L1338.0,595.5L1336.5,594.6L1335.6,593.6L1335.3,592.8L1334.8,592.0L1334.2,590.7L1333.6,589.4L1332.9,588.2L1332.0,587.5L1331.8,586.4L1332.4,585.6L1332.8,584.9L1332.0,584.7L1332.1,583.7L1332.6,583.0L1332.7,582.4L1333.5,582.1L1333.8,581.1L1334.5,581.0L1334.8,580.2L1334.6,578.9L1334.7,577.8L1334.3,577.5L1334.7,576.5Z M1346.8,628.4L1348.0,627.8L1349.3,628.2L1348.6,629.0L1347.2,628.9L1346.8,628.4Z M1346.2,575.0L1347.0,574.9L1346.9,575.4L1346.2,575.4Z M1411.7,506.2L1413.6,506.5L1415.7,508.0L1414.9,509.1L1417.2,510.0L1419.4,510.6L1421.6,512.9L1423.3,515.2L1422.4,516.3L1420.7,516.5L1418.7,515.6L1417.2,515.4L1416.8,514.6L1417.9,516.5L1418.6,518.1L1418.4,519.6L1419.8,520.4L1420.9,519.7L1420.3,518.5L1422.0,519.2L1422.8,519.2L1422.2,517.4L1423.9,516.0L1425.4,516.5L1425.6,515.6L1425.2,514.3L1425.5,512.3L1424.9,511.5L1426.9,512.3L1427.2,513.5L1426.6,514.6L1428.0,515.0L1428.8,513.5L1431.4,512.1L1432.8,512.3L1433.2,511.0L1435.1,511.7L1436.6,511.7L1437.7,510.4L1437.6,509.1L1439.2,509.4L1440.7,510.2L1441.8,510.8L1442.7,511.7L1443.7,512.5L1444.1,511.0L1442.7,509.6L1442.4,506.5L1443.5,504.6L1444.1,502.1L1445.2,501.1L1446.7,502.1L1446.9,505.3L1446.4,508.3L1446.7,511.0L1447.5,512.5L1447.0,514.8L1446.2,516.1L1447.8,515.0L1448.4,513.1L1448.2,511.3L1449.3,511.0L1450.4,512.5L1450.8,513.7L1450.6,511.5L1449.3,510.0L1448.0,507.4L1447.5,504.8L1448.5,502.4L1449.7,503.9L1451.2,503.4L1452.7,504.1L1454.1,504.8L1454.7,507.4L1455.1,505.3L1453.9,503.4L1452.7,500.3L1455.3,499.8L1457.1,499.3L1457.5,496.8L1459.4,495.0L1462.0,493.5L1464.2,492.9L1466.8,491.6L1468.7,489.0L1470.4,487.6L1472.1,489.0L1473.2,491.0L1475.8,491.3L1477.3,494.1L1476.2,497.3L1474.3,499.0L1472.8,501.1L1474.7,500.1L1476.9,499.5L1477.7,500.3L1479.6,499.8L1481.4,501.4L1483.3,501.6L1484.8,499.8L1487.0,500.3L1488.5,501.6L1489.1,504.3L1488.7,506.9L1490.4,506.9L1491.5,505.3L1492.6,505.5L1494.5,505.1L1496.4,505.3L1497.0,503.1L1497.9,502.1L1499.7,502.6L1501.6,503.4L1503.8,503.6L1505.0,505.3L1506.5,506.7L1509.1,506.5L1510.9,506.9L1512.1,509.4L1513.9,509.6L1515.8,509.8L1517.9,509.1L1519.2,510.8L1520.3,508.7L1522.1,509.1L1524.0,509.1L1525.9,510.0L1527.0,510.8L1527.0,518.1L1525.9,519.4L1525.1,519.0L1525.9,521.1L1526.6,522.9L1524.8,522.7L1523.3,523.9L1521.4,525.3L1519.8,526.6L1518.3,525.9L1516.5,526.9L1514.7,526.9L1514.4,528.8L1513.5,529.7L1514.3,531.6L1513.9,533.6L1513.2,534.2L1512.1,535.9L1511.0,537.0L1509.7,538.6L1509.1,536.7L1508.8,534.2L1508.8,531.6L1509.8,529.8L1510.9,528.8L1512.1,526.6L1513.5,524.3L1515.0,522.7L1512.8,524.0L1512.1,525.7L1509.8,524.2L1508.3,526.6L1507.9,527.4L1506.5,528.1L1505.3,527.4L1503.5,527.7L1501.2,527.5L1499.4,527.7L1497.5,530.1L1496.0,531.6L1495.1,533.2L1493.6,534.0L1495.2,534.6L1496.4,534.6L1497.5,535.5L1498.2,536.1L1497.5,538.0L1497.6,540.0L1497.3,541.7L1496.2,543.3L1494.9,545.1L1493.7,546.3L1492.3,547.5L1491.1,547.1L1490.2,548.1L1489.4,549.4L1488.1,550.3L1487.7,551.0L1488.4,551.8L1489.1,553.2L1489.3,554.6L1488.5,555.1L1487.0,555.6L1486.9,554.1L1487.2,553.2L1486.1,552.5L1486.1,550.9L1485.4,550.4L1484.0,551.0L1483.1,551.5L1483.5,550.0L1482.9,549.5L1481.8,550.6L1480.5,551.1L1480.9,552.2L1481.4,552.9L1482.8,552.5L1484.0,553.0L1482.9,553.7L1482.0,554.5L1481.6,555.2L1482.4,556.1L1483.5,557.9L1483.1,559.1L1483.7,559.6L1483.4,560.7L1482.6,561.5L1481.9,562.9L1481.3,563.9L1480.1,564.8L1478.8,565.6L1477.7,565.9L1476.6,566.3L1475.4,566.6L1475.0,566.7L1474.9,567.5L1474.5,567.0L1474.4,566.5L1473.4,566.5L1472.5,566.9L1472.1,567.6L1471.5,568.6L1472.1,569.6L1472.8,570.5L1473.6,571.1L1474.2,572.8L1474.1,574.2L1473.2,575.0L1472.3,575.3L1472.1,575.9L1471.0,576.5L1470.9,575.5L1470.0,575.1L1469.3,574.2L1468.7,573.6L1467.9,573.4L1467.6,572.8L1467.2,573.0L1467.1,574.1L1466.6,575.3L1466.7,576.1L1467.3,576.7L1467.6,577.6L1468.4,577.9L1469.0,578.4L1469.7,579.3L1469.8,580.4L1470.1,581.3L1470.4,582.0L1469.8,582.0L1468.9,581.4L1468.2,580.8L1467.7,580.0L1467.5,578.7L1467.1,578.0L1466.2,577.0L1466.0,576.2L1466.2,575.1L1466.3,574.0L1466.0,572.8L1465.6,571.7L1465.4,570.5L1465.0,570.1L1464.2,570.6L1463.7,571.0L1463.0,570.9L1463.1,569.7L1462.9,568.7L1462.4,567.9L1461.5,566.9L1461.1,565.9L1460.2,565.7L1459.4,566.2L1458.4,566.4L1457.5,566.5L1457.4,567.3L1456.2,568.0L1455.3,568.9L1454.1,570.1L1453.0,570.9L1452.4,571.4L1452.4,572.9L1452.2,574.0L1452.1,575.2L1451.6,576.0L1450.9,576.3L1450.4,576.9L1449.7,576.2L1449.3,575.1L1448.7,574.0L1448.3,573.0L1448.0,571.8L1447.6,571.0L1447.2,570.0L1446.9,568.5L1446.9,567.3L1446.7,566.5L1446.4,566.9L1445.6,567.1L1444.8,566.7L1444.1,565.9L1445.0,565.4L1444.3,565.3L1443.5,564.8L1442.9,564.4L1442.3,563.8L1442.1,563.3L1440.7,563.4L1439.6,563.5L1438.5,563.5L1437.0,563.4L1435.4,563.1L1434.8,562.0L1433.6,562.3L1432.5,562.2L1431.7,561.6L1430.8,561.3L1430.4,560.2L1429.7,559.3L1429.0,559.2L1428.4,559.7L1428.5,560.6L1429.0,561.5L1429.9,562.3L1430.0,563.1L1430.5,563.9L1430.6,563.0L1431.1,563.0L1431.1,564.1L1432.1,564.4L1433.1,564.4L1434.0,563.4L1434.6,562.6L1434.7,563.9L1435.5,564.6L1436.4,564.8L1437.2,565.7L1436.4,567.3L1435.7,568.5L1434.7,569.3L1433.7,569.7L1432.8,570.1L1431.5,570.9L1430.2,571.6L1429.1,572.2L1428.0,572.7L1426.5,573.2L1425.8,573.4L1425.0,573.4L1424.6,571.9L1424.3,570.7L1423.5,569.3L1422.8,568.1L1421.9,566.8L1421.6,565.5L1420.9,564.4L1420.3,563.7L1419.8,562.9L1419.0,561.5L1418.6,560.5L1418.7,559.9L1418.2,561.2L1418.1,561.4L1417.5,560.8L1417.0,559.8L1416.9,559.5L1416.7,558.4L1417.5,558.5L1418.1,558.3L1418.6,557.2L1418.9,556.2L1419.3,555.2L1419.3,553.9L1419.5,553.4L1418.7,553.6L1417.8,553.9L1416.8,554.0L1415.7,553.4L1414.8,553.9L1413.6,553.4L1413.0,552.9L1412.3,551.9L1412.5,550.9L1412.1,550.5L1412.5,549.8L1413.4,549.9L1414.3,549.6L1414.3,549.2L1415.3,549.2L1416.4,548.6L1417.5,548.4L1418.7,548.3L1419.6,549.0L1420.7,549.4L1422.0,549.4L1423.5,548.9L1423.6,547.9L1422.6,547.0L1421.5,546.0L1420.4,545.3L1420.5,544.6L1421.1,544.0L1421.8,543.0L1420.9,543.0L1419.9,543.4L1418.8,543.9L1418.7,544.5L1419.7,544.9L1418.9,545.4L1417.7,545.9L1416.9,544.9L1417.6,544.2L1416.4,543.8L1415.5,543.7L1414.7,544.9L1413.9,546.3L1413.3,547.1L1413.2,548.0L1413.6,548.8L1414.2,549.2L1413.5,549.4L1412.7,549.5L1412.2,550.0L1411.9,549.6L1410.8,549.5L1410.3,550.1L1409.6,549.8L1409.5,550.9L1409.8,551.5L1410.4,552.1L1410.4,552.5L1409.8,552.6L1409.8,553.6L1409.3,553.7L1408.8,553.4L1408.3,552.5L1408.3,551.9L1408.0,551.3L1407.4,550.5L1407.0,549.8L1407.1,548.7L1406.5,548.0L1405.4,547.2L1404.5,546.8L1403.8,546.0L1403.3,545.1L1402.7,545.3L1402.7,544.5L1401.8,544.8L1401.8,545.9L1402.7,546.7L1403.1,547.9L1403.9,548.5L1404.5,548.6L1405.2,549.4L1406.2,550.1L1406.2,550.5L1405.4,549.9L1404.9,550.6L1405.3,551.3L1404.8,551.9L1404.2,552.4L1404.4,551.5L1404.5,550.7L1403.9,550.2L1403.2,549.6L1402.2,549.1L1401.3,548.2L1400.3,547.4L1400.1,546.4L1399.2,545.9L1398.1,546.5L1397.1,547.2L1396.4,546.9L1395.5,546.8L1394.8,547.2L1394.9,548.1L1394.1,549.0L1393.1,549.6L1392.4,550.6L1392.6,551.5L1392.1,552.5L1391.1,553.3L1390.3,553.4L1389.2,553.5L1388.5,554.0L1387.8,553.6L1387.1,553.0L1385.9,553.1L1385.9,552.0L1385.5,551.5L1385.8,550.1L1386.0,548.9L1385.8,547.5L1386.4,546.6L1387.6,546.7L1389.1,546.9L1390.3,546.9L1391.2,546.9L1391.6,545.6L1391.7,544.4L1391.0,543.2L1390.4,542.6L1389.2,542.1L1389.0,541.4L1390.3,541.1L1391.3,541.2L1391.1,540.1L1391.6,540.4L1392.6,540.2L1393.6,539.5L1393.8,538.7L1395.0,538.1L1395.5,537.4L1396.0,536.1L1397.0,535.6L1397.9,535.4L1398.8,535.1L1399.1,534.4L1398.8,533.1L1398.6,531.2L1399.6,530.6L1400.3,529.9L1400.3,531.6L1400.0,532.8L1399.7,533.7L1400.0,534.2L1400.6,534.9L1401.7,534.5L1402.7,534.6L1403.2,535.0L1404.7,534.4L1406.3,534.0L1407.2,534.4L1407.4,533.6L1408.2,532.9L1408.2,531.0L1408.8,530.1L1409.7,530.9L1410.7,530.6L1410.7,529.1L1410.1,528.4L1410.1,527.7L1411.0,527.4L1412.3,527.4L1413.4,527.2L1415.1,526.6L1413.8,525.7L1411.9,526.0L1410.8,526.5L1409.7,526.8L1408.9,525.9L1408.4,524.3L1408.4,522.2L1409.3,520.6L1410.7,518.9L1411.4,518.3L1410.6,517.1L1409.1,517.4L1408.4,519.2L1407.8,520.6L1406.3,521.9L1405.5,523.9L1405.4,525.6L1406.5,526.6L1406.2,527.8L1405.1,528.8L1404.9,530.6L1404.5,532.0L1403.3,532.8L1402.2,532.9L1402.0,531.9L1401.5,530.2L1400.9,528.4L1400.5,527.2L1400.2,528.1L1399.2,529.0L1397.7,529.5L1396.7,528.4L1396.4,526.2L1396.2,524.0L1397.0,522.6L1398.7,521.1L1400.0,520.2L1401.1,518.7L1402.0,516.7L1403.1,514.3L1404.1,512.5L1405.6,510.4L1406.7,509.1L1408.6,508.3L1410.1,506.9L1411.7,506.2Z M1258.0,510.8L1259.9,512.1L1262.1,514.3L1264.4,515.2L1265.6,516.5L1264.7,517.6L1263.6,519.4L1262.1,518.9L1260.6,517.6L1259.1,517.4L1258.0,518.1Z M1416.9,559.5L1416.7,558.4L1415.7,558.2L1414.8,558.4L1413.0,558.4L1411.2,558.0L1409.9,557.3L1408.6,556.9L1407.5,557.5L1407.4,558.7L1406.3,559.1L1404.8,558.5L1403.9,557.5L1402.4,556.9L1401.1,556.7L1400.3,556.2L1400.1,555.5L1400.7,554.6L1400.4,553.6L1400.7,553.1L1400.1,553.0L1399.2,553.0L1398.1,553.2L1396.6,553.4L1394.7,553.3L1393.2,553.8L1392.0,554.4L1390.9,555.0L1390.0,554.8L1389.1,554.9L1388.5,554.2L1388.1,554.3L1387.5,555.8L1386.8,556.3L1385.8,557.0L1385.2,558.2L1385.3,559.2L1384.9,560.1L1383.9,561.0L1382.8,561.4L1381.8,562.6L1381.1,563.9L1380.4,565.1L1379.8,566.6L1380.3,567.9L1380.5,569.3L1380.2,570.7L1379.5,571.9L1380.0,572.9L1380.0,573.7L1380.8,574.6L1381.5,575.2L1382.3,575.8L1382.6,576.6L1383.2,577.5L1384.1,578.0L1384.9,578.7L1385.8,579.3L1386.8,579.7L1388.0,579.4L1389.4,579.1L1390.9,579.4L1392.3,578.9L1393.4,578.4L1394.6,578.2L1395.7,578.3L1396.5,579.0L1397.0,579.8L1397.9,579.7L1398.9,579.6L1399.4,580.0L1399.8,580.5L1399.8,581.4L1399.5,582.3L1399.4,583.0L1399.1,583.6L1399.6,584.5L1400.3,585.2L1400.9,586.0L1401.5,586.7L1401.7,587.5L1402.1,588.6L1402.4,589.7L1402.8,591.0L1402.7,592.3L1401.8,593.4L1401.5,594.7L1401.3,596.0L1401.7,597.3L1402.4,598.7L1403.2,600.3L1403.4,601.7L1403.7,603.3L1404.3,604.6L1405.0,605.5L1405.4,606.9L1406.1,608.1L1406.0,609.1L1406.3,610.1L1407.3,610.8L1408.6,610.3L1410.1,610.0L1411.6,610.0L1412.7,609.6L1413.6,608.9L1414.8,607.6L1415.7,606.4L1416.6,605.4L1417.1,604.0L1416.9,603.0L1418.3,602.1L1419.0,601.3L1419.0,599.9L1418.7,598.7L1418.9,597.9L1420.0,596.8L1421.0,596.0L1422.2,595.3L1422.9,594.3L1422.9,593.3L1422.8,592.0L1422.8,590.9L1422.2,590.1L1422.0,589.0L1421.9,588.1L1421.5,587.5L1421.7,586.7L1422.2,586.0L1422.6,585.0L1423.4,584.3L1424.1,583.4L1425.2,582.4L1426.3,581.5L1427.4,580.5L1428.4,579.5L1429.1,578.1L1429.9,576.8L1430.5,575.6L1430.8,574.7L1430.7,574.0L1429.9,574.3L1428.7,574.5L1427.4,574.8L1426.1,575.1L1425.2,574.7L1424.8,574.3L1424.9,573.6L1424.2,572.9L1423.3,571.9L1422.2,571.4L1421.9,570.5L1421.3,569.3L1420.4,568.6L1420.3,567.5L1420.1,566.3L1419.3,565.1L1419.0,564.3L1418.3,563.0L1417.8,561.8L1417.3,560.8L1416.9,559.8L1416.9,559.5Z M1429.3,592.0L1430.0,593.6L1430.2,594.7L1429.6,595.7L1429.4,596.9L1428.9,598.7L1428.2,600.7L1427.7,602.2L1426.3,602.8L1425.4,602.3L1424.9,600.8L1425.0,599.5L1425.6,598.4L1425.4,597.1L1425.7,595.4L1426.9,595.0L1428.0,594.2L1428.6,593.2L1429.3,592.0Z M1388.2,539.7L1389.9,539.4L1391.4,538.9L1392.7,538.8L1393.5,538.3L1393.1,537.7L1393.8,536.5L1392.7,536.1L1392.6,535.4L1392.1,534.4L1391.4,533.5L1391.0,532.4L1390.1,532.3L1390.9,530.9L1391.2,530.1L1389.7,530.1L1390.2,528.7L1388.8,528.7L1388.2,530.2L1387.9,531.5L1388.4,532.9L1388.8,533.8L1389.9,533.7L1390.3,534.9L1390.2,535.8L1389.1,535.8L1389.4,536.7L1388.6,537.6L1389.9,538.1L1390.0,538.3L1389.1,538.6L1388.2,539.7Z M1385.0,537.8L1386.3,537.7L1387.7,537.1L1388.0,535.8L1388.0,534.6L1388.4,533.8L1387.8,533.3L1386.9,533.2L1386.1,534.1L1385.0,534.6L1385.0,535.6L1385.6,536.0L1385.1,537.0L1385.0,537.8Z M1401.8,552.3L1403.0,552.2L1404.2,552.1L1403.8,553.5L1402.6,553.0L1401.8,552.6L1401.8,552.3Z M1398.6,549.4L1399.7,549.4L1399.7,551.1L1398.8,551.3L1398.6,549.4Z M1398.9,547.9L1399.6,547.3L1399.6,548.9L1399.1,548.9L1398.9,547.9Z M1410.1,554.6L1411.2,554.7L1412.2,554.9L1411.2,555.1L1410.1,554.9Z M1416.6,555.1L1418.3,554.5L1417.6,555.3L1416.6,555.1Z M1400.7,480.4L1403.0,479.1L1405.2,478.7L1408.2,477.4L1411.9,477.8L1412.7,480.4L1410.4,482.0L1408.6,484.7L1406.7,488.0L1405.2,491.3L1403.3,488.7L1401.5,484.3L1400.7,480.4Z M1431.0,504.8L1432.1,501.1L1433.6,497.3L1435.5,495.0L1438.8,492.3L1441.8,490.7L1443.8,490.0L1443.7,492.0L1440.3,494.4L1437.7,497.3L1435.8,500.8L1435.1,505.1L1435.8,507.1L1433.6,507.4L1432.1,506.5L1431.0,504.8Z M1463.5,482.0L1465.4,478.7L1467.2,477.4L1470.6,481.6L1471.0,485.5L1467.2,486.6L1465.0,484.3L1463.5,482.0Z M1494.9,495.0L1496.4,492.9L1498.6,493.2L1500.8,494.4L1503.8,495.3L1505.0,496.2L1502.3,496.8L1499.4,496.8L1497.1,497.1L1494.9,495.0Z M1496.7,500.6L1499.7,499.8L1499.4,501.1L1497.5,500.8Z M1525.9,506.2L1527.0,505.3L1527.0,506.7Z M1258.0,505.3L1259.9,505.8L1258.0,506.7Z M1498.8,534.5L1499.4,536.1L1499.6,538.0L1499.8,540.3L1499.2,542.0L1499.7,543.3L1499.1,544.2L1498.6,542.6L1498.6,540.3L1498.6,538.0L1498.5,536.1L1498.8,534.5Z M1497.3,548.9L1497.3,547.3L1498.2,547.0L1498.4,544.9L1499.4,546.0L1501.1,546.6L1500.8,547.3L1499.6,548.4L1498.2,547.9L1497.3,548.9Z M1498.2,549.1L1498.6,550.8L1497.9,552.3L1497.8,553.7L1497.7,554.6L1497.0,555.1L1496.1,555.3L1494.9,555.4L1494.7,556.0L1493.9,556.4L1493.4,555.5L1491.9,555.7L1490.4,556.0L1490.4,555.4L1491.5,554.7L1493.0,554.5L1494.1,554.4L1494.7,553.2L1495.1,552.7L1496.0,552.9L1496.7,551.8L1497.1,550.3L1497.3,549.2L1498.2,549.1Z M1489.5,556.4L1490.8,556.2L1491.1,557.0L1490.6,558.3L1489.8,558.4L1489.6,557.3L1489.5,556.4Z M1491.5,556.0L1493.0,555.8L1492.8,556.5L1491.9,557.0L1491.3,556.6L1491.5,556.0Z M1483.3,563.5L1483.7,564.1L1482.9,566.1L1482.2,565.3L1482.8,563.9L1483.3,563.5Z M1473.7,568.4L1474.3,567.7L1475.4,567.9L1475.1,568.9L1473.9,569.1L1473.7,568.4Z M1482.5,568.9L1483.8,568.9L1483.9,570.3L1483.4,571.2L1483.7,572.3L1484.8,572.6L1485.2,573.4L1484.4,573.0L1483.4,572.6L1482.6,572.3L1482.2,571.3L1482.4,570.5L1482.5,568.9Z M1483.7,574.1L1484.6,574.3L1485.2,574.6L1486.1,573.6L1486.4,574.7L1485.9,575.3L1485.2,575.5L1484.6,576.0L1484.0,575.5L1483.7,575.0L1483.7,574.1Z M1480.1,576.7L1481.0,575.9L1481.8,574.9L1481.9,575.2L1481.0,576.2L1480.3,576.9Z M1483.7,577.8L1483.9,577.0L1484.8,576.5L1485.5,576.6L1486.3,575.6L1486.9,576.6L1487.0,577.8L1486.4,578.5L1486.1,577.9L1485.3,578.2L1484.8,577.4L1483.7,577.8Z M1473.9,581.9L1474.7,581.7L1475.7,581.1L1476.9,580.5L1478.1,579.4L1479.2,578.3L1479.9,577.8L1481.0,578.7L1481.4,579.3L1480.7,579.8L1480.4,580.8L1480.7,581.9L1481.3,582.3L1480.4,583.0L1480.1,583.7L1479.6,584.7L1479.2,585.8L1478.1,586.1L1476.9,585.4L1476.0,585.4L1474.8,585.1L1474.7,584.1L1473.9,583.2L1473.9,581.9Z M1463.7,578.8L1465.4,579.1L1466.3,580.2L1467.6,581.4L1468.7,582.3L1469.8,583.0L1470.2,583.7L1470.8,584.7L1471.7,585.4L1471.6,587.3L1470.6,587.3L1469.5,586.4L1468.3,585.2L1467.6,583.9L1466.5,582.8L1466.1,581.7L1465.0,580.8L1463.9,579.5L1463.7,578.8Z M1471.1,588.1L1472.1,587.5L1473.6,587.9L1475.3,587.8L1476.7,588.2L1478.1,588.8L1477.9,589.5L1475.4,589.2L1473.2,588.8L1472.0,588.5L1471.1,588.1Z M1478.6,589.1L1479.9,589.1L1481.4,589.2L1482.9,589.3L1484.4,589.2L1484.3,589.6L1482.2,589.7L1480.7,589.7L1479.2,589.7L1478.6,589.1Z M1484.8,590.7L1485.5,589.9L1487.0,589.3L1487.5,589.4L1486.3,590.1L1485.2,590.7Z M1481.8,587.1L1481.9,585.6L1481.3,585.0L1481.8,583.6L1482.0,582.6L1482.9,582.0L1484.4,582.3L1485.9,581.8L1485.5,582.6L1484.4,582.7L1483.3,582.6L1482.3,583.6L1483.1,583.7L1484.6,583.6L1483.7,584.3L1483.3,584.5L1484.0,585.6L1484.4,586.7L1483.7,586.7L1483.3,585.2L1482.8,585.1L1482.5,587.1L1481.8,587.1Z M1487.8,581.5L1488.5,581.9L1488.1,583.0L1487.9,583.6L1487.8,582.4Z M1488.1,585.2L1490.2,585.2L1490.0,585.8L1488.3,585.6Z M1490.4,583.6L1491.9,583.4L1492.8,583.7L1492.9,584.9L1493.7,585.5L1494.9,584.5L1496.0,584.3L1497.9,584.9L1499.4,585.6L1500.8,586.4L1501.6,587.3L1502.7,587.5L1502.9,588.2L1503.5,589.4L1505.0,590.7L1503.8,590.7L1502.3,590.1L1501.6,589.2L1500.5,588.8L1499.7,589.4L1499.0,589.9L1497.9,589.8L1496.4,589.0L1495.6,589.2L1495.4,588.2L1496.1,587.9L1495.6,587.1L1493.7,586.4L1492.3,585.8L1491.7,586.0L1491.7,585.1L1492.5,584.7L1491.4,584.6L1490.4,584.0L1490.4,583.6Z M1503.5,587.2L1505.0,587.1L1506.2,586.1L1506.1,586.7L1505.0,587.6L1503.8,587.6Z M1508.3,587.5L1509.8,588.5L1512.1,589.8L1513.2,590.7L1512.1,590.3L1509.8,589.0L1508.3,587.9Z M1515.0,598.4L1516.5,599.5L1517.3,600.1L1516.8,600.0L1515.3,598.9Z M1525.0,596.2L1526.0,596.3L1525.8,596.8L1525.1,596.8Z M1258.0,595.3L1258.6,595.4L1258.0,595.7Z M1526.1,595.4L1527.0,595.3L1527.0,595.7L1526.3,595.8Z M1517.0,594.3L1517.5,594.5L1517.7,595.5L1517.1,595.0Z M1452.3,575.6L1453.2,576.6L1453.6,577.8L1453.0,578.4L1452.4,578.5L1452.1,577.4L1452.1,576.4L1452.3,575.6Z M1477.7,599.7L1479.6,598.7L1481.4,598.3L1483.3,597.5L1483.9,596.1L1484.8,596.1L1485.5,595.1L1486.7,593.7L1488.0,594.0L1488.5,594.3L1489.3,594.2L1489.6,592.8L1490.2,592.3L1491.5,591.7L1493.4,592.0L1494.7,592.0L1494.1,593.2L1493.7,594.3L1495.2,595.1L1496.6,596.3L1497.7,596.3L1498.2,594.7L1498.4,592.8L1498.6,591.3L1499.0,591.0L1499.7,592.4L1500.0,593.8L1501.1,594.3L1501.2,595.5L1501.7,597.3L1502.7,597.9L1503.8,598.9L1505.1,600.5L1505.7,601.5L1506.8,602.7L1507.0,604.4L1507.2,605.7L1506.8,607.4L1506.1,609.0L1505.5,610.0L1505.0,611.4L1504.6,613.0L1503.1,613.6L1502.0,614.7L1500.7,613.9L1499.7,614.5L1497.9,613.8L1496.9,612.6L1496.0,611.4L1495.6,610.5L1495.5,609.1L1495.2,610.2L1494.1,610.8L1493.7,610.5L1493.0,609.1L1491.9,608.3L1490.4,607.8L1488.9,608.0L1486.7,608.5L1485.2,609.1L1484.8,610.0L1482.2,610.0L1480.7,610.9L1479.2,610.9L1478.4,610.3L1479.0,608.3L1478.4,606.5L1477.8,604.8L1477.3,603.1L1477.5,601.5L1477.5,600.3L1477.7,599.7Z M1500.6,616.3L1502.0,616.7L1503.3,616.5L1503.2,617.8L1502.7,619.0L1501.6,619.2L1501.0,617.8L1500.6,616.3Z M1521.5,610.4L1522.7,611.4L1523.6,612.6L1524.0,613.4L1525.5,613.4L1525.7,614.2L1524.8,615.2L1524.6,616.2L1523.5,617.2L1523.1,616.5L1523.3,615.7L1522.4,615.0L1523.0,613.9L1523.0,612.8L1522.1,611.4L1521.5,610.4Z M1521.5,616.2L1522.7,617.4L1521.8,618.9L1521.4,619.5L1520.5,620.0L1520.1,621.7L1518.8,622.4L1517.7,622.0L1516.9,621.6L1518.0,619.9L1519.5,618.7L1520.5,617.6L1521.0,616.4L1521.5,616.2Z M1275.9,567.6L1276.7,567.9L1276.8,568.2L1276.2,568.6L1275.9,568.1Z M1274.3,566.5L1274.7,566.6L1275.4,566.9L1275.8,567.2L1275.5,567.3L1274.4,566.7Z M1443.9,624.9L1445.2,625.1L1445.0,625.8L1444.1,625.7Z M1432.4,573.5L1433.2,573.6L1432.6,573.7Z M1272.9,709.2L1273.7,683.2L1274.4,677.0L1278.2,676.7L1281.9,674.7L1284.2,671.6L1287.9,670.4L1291.6,668.4L1295.4,667.8L1299.1,665.9L1302.8,667.0L1306.6,667.6L1310.3,668.9L1314.0,669.5L1317.0,667.6L1316.3,664.4L1319.3,662.6L1321.5,664.4L1324.5,663.9L1327.5,664.4L1331.2,665.7L1334.2,664.4L1336.5,662.6L1338.7,663.9L1339.8,660.7L1338.7,657.3L1340.9,655.8L1342.1,653.1L1342.8,650.8L1344.3,648.6L1345.8,646.8L1347.7,645.4L1349.5,644.6L1349.9,645.4L1348.4,646.8L1346.9,648.4L1345.8,650.2L1344.3,652.1L1343.6,654.3L1345.4,656.4L1346.5,659.5L1346.9,663.1L1347.3,667.0L1346.2,670.4L1343.2,673.4L1338.7,675.3L1335.0,676.7L1334.2,681.3L1332.7,685.2L1334.2,691.8L1335.7,709.2Z M1353.6,709.2L1354.0,684.4L1356.6,680.2L1360.0,681.7L1361.5,687.3L1361.5,709.2Z M1347.7,709.2L1348.0,685.6L1349.2,682.4L1350.3,685.2L1350.7,709.2Z M1362.6,709.2L1363.4,687.3L1365.6,680.2L1367.8,677.7L1370.8,673.4L1373.1,669.8L1376.1,667.0L1379.0,664.4L1382.0,661.9L1384.3,660.0L1386.5,659.1L1389.5,658.6L1391.8,657.3L1394.7,657.7L1397.7,657.3L1400.7,657.3L1403.7,656.9L1406.7,657.3L1409.7,658.0L1412.7,656.9L1415.7,655.6L1417.9,654.7L1420.1,655.8L1422.4,654.5L1424.6,652.9L1426.9,652.1L1429.1,650.8L1431.4,649.1L1433.6,649.1L1435.8,650.8L1438.1,651.9L1440.3,652.3L1442.6,652.7L1444.8,654.1L1446.3,656.9L1448.5,656.6L1450.4,654.7L1452.3,652.7L1454.5,651.2L1456.8,650.8L1459.0,650.8L1461.2,650.0L1463.5,650.0L1465.7,649.1L1468.0,648.7L1470.2,649.3L1472.5,650.0L1474.7,649.3L1476.9,648.9L1479.2,650.4L1481.4,651.0L1483.7,650.4L1485.9,649.9L1488.1,650.8L1490.4,649.3L1492.6,649.3L1494.9,649.9L1497.1,650.6L1499.4,651.2L1501.6,652.5L1503.8,653.7L1506.1,654.3L1508.3,655.6L1510.6,656.0L1512.8,658.0L1515.0,658.6L1517.3,659.3L1519.8,660.2L1519.5,663.1L1518.0,665.7L1516.5,668.4L1515.0,671.3L1514.7,676.0L1515.4,680.2L1513.5,685.2L1512.1,689.5L1512.1,709.2Z" fill="#808080" stroke="#2b2b2b" stroke-width="0.9" stroke-linejoin="round"/>
<path d="M1287.1,509.6L1287.1,526.2L1288.6,526.6L1289.8,528.2L1291.3,527.1L1292.7,529.0L1294.0,531.5L1295.4,532.3L1295.2,533.6 M1300.5,540.9L1321.4,540.9L1321.8,541.2L1323.8,541.7L1325.6,542.0L1326.4,541.7L1329.1,543.2L1329.4,543.8L1330.1,544.2L1330.9,544.9L1331.2,546.8L1330.6,548.2L1331.6,548.4L1333.5,547.5L1333.5,546.9L1335.1,546.7L1335.6,546.1L1336.6,545.3L1339.1,545.3L1340.0,544.3L1340.8,542.7L1341.8,543.0L1341.8,544.4L1342.4,545.3 M1305.0,557.3L1306.8,557.1L1309.6,558.4L1311.7,558.4L1311.7,557.9L1312.9,557.9L1314.2,559.2L1314.8,560.1L1315.5,560.3L1316.0,559.7L1317.0,559.8L1318.2,561.5L1318.5,562.5L1319.9,563.0 M1323.6,572.0L1323.8,571.5L1324.0,570.8L1324.9,570.8L1324.5,570.0L1324.5,569.5L1325.8,569.5L1326.5,568.9 M1325.8,569.5L1325.8,571.0L1326.1,571.0 M1326.5,571.1L1325.8,572.1L1325.2,572.6 M1325.8,572.1L1326.9,572.9 M1327.3,573.2L1327.7,572.6L1328.5,572.5L1329.1,571.8L1330.3,571.7 M1328.5,574.7L1329.2,574.7L1330.0,574.8 M1330.6,576.9L1330.6,575.8 M1338.9,568.0L1338.8,569.3 M1339.2,574.1L1338.3,574.7L1338.0,576.0L1338.4,576.8L1338.7,577.8L1340.1,577.8L1340.6,578.4L1342.1,578.4L1341.8,579.6L1342.2,581.3L1342.5,582.1 M1342.5,582.1L1340.3,581.7L1340.6,582.6L1340.2,583.0L1340.6,583.8L1340.3,586.1 M1340.3,586.1L1339.7,585.8L1338.0,584.8L1337.1,583.7L1336.3,583.1 M1336.3,583.1L1335.5,582.7L1334.7,582.7L1333.6,582.0 M1336.3,583.1L1336.0,584.1L1335.3,584.9L1334.0,585.5L1333.8,586.4L1333.1,586.7L1332.5,586.3L1332.5,585.5 M1340.3,586.1L1338.0,587.0L1337.3,588.2L1338.0,589.8L1338.5,590.1L1339.7,590.1L1339.8,591.3L1340.5,591.2 M1340.5,591.2L1341.2,592.4L1340.9,593.3L1340.8,594.6L1340.6,595.5L1340.6,596.3L1339.9,596.9 M1340.6,596.3L1341.1,597.8L1341.4,599.0L1341.8,600.5 M1340.5,591.2L1341.5,591.3L1343.6,590.4L1343.7,591.7L1344.5,592.4L1345.6,592.8L1346.8,593.2L1347.3,593.4L1347.5,595.3L1348.9,595.3L1349.0,596.2L1349.5,596.8L1349.3,597.5L1349.0,598.1 M1349.0,598.1L1348.3,597.8L1346.3,597.9L1345.9,598.7L1345.6,600.0 M1341.8,600.5L1343.0,599.7L1344.5,600.5L1345.6,600.0 M1341.8,600.5L1341.5,601.9L1341.5,603.9L1340.4,605.2L1340.2,606.9L1339.8,607.8L1340.3,609.4L1339.9,611.1L1339.4,612.5L1339.5,614.3L1338.9,615.3L1338.8,617.6L1338.8,619.2L1339.1,620.6L1338.9,622.8L1338.4,623.7L1337.7,625.5L1337.7,626.7L1338.5,627.1L1338.5,628.3L1338.8,628.6L1340.6,628.9L1341.2,629.4 M1341.2,629.5L1341.2,632.3 M1345.6,600.0L1346.9,601.3L1348.6,602.1L1349.5,602.8L1348.7,604.0L1350.3,604.4L1350.9,604.3L1351.7,602.9 M1349.0,598.1L1349.2,599.9L1350.8,600.2L1351.1,601.5L1351.9,601.6L1351.7,602.9 M1351.7,602.9L1352.4,603.2L1352.4,603.9L1351.3,604.7L1349.5,606.7 M1349.5,606.7L1349.1,608.3L1348.9,610.0 M1349.5,606.7L1350.7,607.3L1351.7,607.8L1352.7,608.9L1352.6,609.9 M1342.5,582.1L1343.6,582.5L1344.5,582.0L1344.5,581.1L1345.1,580.1L1344.2,579.9L1345.6,580.0L1346.3,579.9L1347.1,579.1 M1347.1,579.1L1346.6,578.6L1346.8,578.0L1347.4,577.8L1347.7,576.6 M1347.1,579.1L1347.7,579.3L1348.0,580.0L1347.7,581.4L1348.4,582.0L1348.8,582.0L1349.7,581.5 M1349.7,581.5L1349.2,580.4L1349.2,579.6L1349.8,578.6 M1349.7,581.5L1350.7,581.6L1350.7,581.1L1351.7,581.3 M1351.7,581.3L1352.2,580.3L1351.8,579.3L1352.2,578.7 M1351.7,581.3L1352.9,581.4L1353.6,580.2L1353.9,579.9 M1385.9,548.5L1386.4,548.3L1387.6,548.5L1387.9,548.9L1387.3,549.4L1387.3,550.6L1386.9,550.7L1387.3,551.3L1387.0,551.9L1387.3,552.1L1387.0,553.0 M1391.2,546.9L1392.1,547.5L1393.0,547.5L1393.8,547.9L1394.9,548.0 M1398.1,546.5L1397.7,546.1L1397.7,545.1L1397.6,544.4L1397.7,544.3 M1397.7,544.3L1397.1,544.0L1397.6,543.1L1398.2,542.5 M1398.2,542.5L1398.6,540.9L1397.5,540.7L1397.1,540.3 M1397.1,540.3L1396.1,539.7L1395.6,539.7L1394.9,538.8L1394.4,538.4 M1395.0,538.1L1396.2,538.0L1396.8,538.3L1397.0,538.8 M1397.0,538.8L1397.1,539.5L1397.1,540.3 M1397.0,538.8L1397.1,537.6L1397.6,537.4L1397.8,536.5L1397.9,535.8 M1398.9,533.7L1399.9,533.8 M1403.1,535.0L1403.3,536.3L1403.5,537.4L1403.7,538.6 M1403.7,538.6L1402.4,539.0L1401.6,539.4L1401.8,540.1L1402.8,541.1 M1402.8,541.1L1402.2,542.5L1401.6,542.5L1400.3,542.6L1399.7,542.6 M1399.7,542.6L1398.9,542.3L1398.2,542.5 M1397.7,544.3L1398.5,544.2L1398.9,543.9L1399.2,544.3L1399.5,543.8L1400.3,543.6 M1399.7,542.6L1399.7,543.0L1400.3,543.6 M1400.3,543.6L1401.6,543.1L1402.7,543.7 M1402.7,543.7L1402.7,544.5 M1402.7,543.7L1403.7,543.6L1404.5,543.3 M1404.5,543.3L1404.8,542.6L1405.3,542.0 M1402.8,541.1L1403.7,540.9L1405.1,541.3L1405.3,542.0 M1403.7,538.6L1404.7,539.1L1405.2,539.4L1406.0,539.7L1406.5,540.3 M1406.5,540.3L1406.0,540.9L1405.3,542.0 M1406.5,540.3L1407.4,540.5L1409.3,540.8 M1405.3,542.0L1406.5,542.2L1407.4,541.8L1409.0,541.6 M1409.0,541.6L1409.3,540.8L1410.4,539.1L1410.1,537.8L1410.1,536.6L1410.4,535.0L1409.5,534.4L1407.2,534.4 M1409.5,534.4L1410.1,534.9L1411.6,534.6L1412.4,532.9L1411.2,531.9L1408.9,531.7L1408.2,532.1 M1409.5,534.4L1409.5,533.6L1408.3,533.2 M1410.7,529.7L1411.9,529.8L1413.0,530.2 M1412.4,532.9L1413.6,532.0L1413.3,530.5L1413.0,530.2L1413.0,528.4L1413.4,527.4 M1413.6,532.0L1415.6,532.8L1415.7,534.0L1416.9,535.6L1416.0,535.9L1416.3,537.2 M1410.1,537.8L1411.6,537.5L1413.4,537.8L1415.3,538.1L1416.3,537.2 M1416.3,537.2L1417.9,537.0L1419.0,539.1L1420.5,539.3L1422.4,540.2L1422.2,542.1L1421.0,542.9 M1409.0,541.6L1410.8,542.1L1412.4,541.7L1413.4,541.7L1414.2,542.6L1414.9,543.8 M1412.4,541.7L1413.6,543.6L1413.6,544.7L1414.7,544.9 M1409.0,541.6L1408.3,543.8L1407.7,544.1 M1407.7,544.1L1406.5,544.3L1405.2,544.3L1404.7,543.7L1404.5,543.3 M1407.7,544.1L1408.5,545.3L1409.3,545.6L1409.5,546.1L1409.6,546.5L1411.2,546.6L1412.7,546.2L1413.9,546.6 M1409.5,546.1L1409.2,548.1L1409.7,549.1L1410.8,548.9L1412.0,549.1L1412.2,548.7L1413.4,548.4 M1412.0,549.1L1411.9,549.6 M1407.4,550.6L1408.2,549.6L1409.6,549.1 M1407.0,548.5L1407.8,548.2L1407.9,549.4L1408.2,549.6 M1407.8,548.2L1408.6,548.1L1409.2,548.1 M1402.7,544.7L1403.9,544.7L1404.3,545.1L1405.2,545.1L1406.7,545.4L1407.0,546.8L1406.3,547.9 M1406.7,545.4L1406.8,544.3 M1407.0,546.8L1407.7,547.5L1407.8,548.2 M1404.7,543.7L1403.9,544.7 M1400.9,528.1L1401.6,526.6L1401.8,524.6L1401.5,521.4L1403.0,519.4L1403.3,516.7L1404.6,513.9L1406.0,511.9L1407.7,510.8L1407.9,510.6 M1410.6,517.1L1410.2,514.4L1410.1,513.1L1407.9,510.6 M1407.9,510.6L1409.2,511.5L1411.1,511.7L1411.9,509.4L1413.3,508.5L1414.4,510.2L1414.1,510.8L1415.5,509.1 M1414.1,510.8L1413.8,512.5L1414.9,513.5L1414.2,515.0L1415.0,517.3L1414.7,518.9L1415.3,519.9L1416.0,522.1L1414.8,524.6L1413.3,525.9 M1387.0,533.5L1386.4,534.2L1387.1,534.6L1387.8,534.7 M1423.5,548.9L1425.0,549.3L1425.2,550.2L1426.0,550.6L1425.5,550.9L1425.7,551.9L1426.0,553.0L1425.6,553.2 M1419.4,554.1L1419.9,553.4L1421.0,553.3L1423.0,553.1L1424.1,553.0L1425.6,553.2 M1422.4,546.8L1424.3,547.1L1425.8,547.6L1427.2,548.5L1428.2,549.2L1428.8,548.6 M1425.0,549.3L1426.1,549.1L1427.2,548.5 M1426.1,549.1L1426.5,549.7L1427.2,550.8L1426.9,551.4 M1426.0,550.6L1426.9,551.4L1428.4,550.6L1429.0,551.9 M1426.0,553.0L1426.4,554.1L1427.0,555.0L1426.4,556.0L1426.9,556.9L1428.1,557.8L1428.1,558.6L1428.8,559.5 M1424.1,553.0L1423.3,553.8L1423.1,555.6L1421.5,556.5L1420.0,557.5L1419.2,557.1 M1421.5,556.5L1421.8,557.6L1420.1,558.2L1420.9,559.1L1420.5,559.5L1419.4,560.2L1418.7,560.0 M1421.8,557.6L1422.7,557.8L1424.0,558.5L1425.9,560.2L1427.2,560.3L1428.0,560.3L1428.1,560.8L1428.7,560.8 M1427.2,560.3L1427.9,559.4L1428.4,559.5 M1418.1,558.4L1418.6,559.9 M1418.7,559.9L1419.0,558.2L1419.1,557.1 M1418.7,556.8L1419.3,556.5L1419.8,555.8L1419.4,555.4 M1424.5,570.6L1424.9,569.7L1426.3,569.8L1427.6,570.1L1428.5,569.2L1431.4,568.5L1433.6,567.7L1434.1,566.1L1433.7,565.6L1431.8,565.4L1431.1,564.4 M1433.7,565.6L1434.3,564.5L1434.6,563.8 M1431.4,568.5L1432.2,570.3 M1432.8,552.9L1434.5,552.2L1435.3,552.3L1436.7,552.7L1438.2,553.6L1437.7,555.5L1438.0,558.2L1438.7,558.6L1438.0,559.6L1439.2,560.0L1439.7,561.9L1438.5,563.5 M1438.0,559.6L1440.3,560.0L1442.0,559.6L1442.3,558.4L1444.3,557.8L1444.4,556.8L1445.0,556.5L1445.6,555.7L1446.0,553.8L1448.2,553.2 M1438.2,553.6L1439.2,554.8L1440.7,553.9L1442.2,552.8L1443.3,553.2L1444.4,552.6L1445.9,552.4L1446.0,553.5L1448.2,553.2L1448.5,553.0 M1443.5,564.8L1445.6,564.2L1444.8,561.4L1446.6,560.5L1448.2,558.5L1448.0,557.0L1449.9,555.4L1450.6,554.6 M1448.5,553.0L1450.6,554.6L1451.5,555.7L1451.5,557.4L1451.3,558.2L1453.1,559.3 M1453.1,559.3L1452.4,560.5L1454.7,561.7L1456.2,562.3L1458.3,562.5L1458.3,561.3 M1453.1,559.3L1455.4,560.5L1456.8,561.3L1458.3,561.3L1458.9,561.8L1459.5,561.0L1461.0,561.4L1461.6,561.3L1463.2,560.1L1464.4,560.0L1465.2,560.9 M1458.9,561.8L1459.6,562.3L1461.3,562.1L1461.0,561.4 M1459.0,566.2L1458.9,564.3L1458.3,563.8L1458.5,562.6L1459.6,563.0L1461.5,563.7L1460.6,564.5L1460.9,565.3L1461.5,564.8L1461.7,566.6L1461.5,567.2 M1461.7,566.6L1462.2,565.3L1463.2,563.5L1463.6,562.3L1465.2,560.9 M1465.2,560.9L1466.3,561.6L1466.3,563.0L1465.4,564.5L1466.3,564.4L1466.6,566.1L1468.1,566.8 M1468.1,566.8L1467.3,567.5L1465.7,567.9L1465.6,569.7L1466.2,570.9L1465.9,571.6L1466.6,573.0L1466.8,574.1L1466.3,575.2L1466.2,575.6 M1468.1,566.8L1468.9,565.8L1470.1,565.7L1471.2,565.1L1472.2,565.5L1472.2,566.2L1473.2,566.5 M1468.9,565.8L1469.5,567.1L1470.9,567.8L1470.2,568.6L1471.4,569.3L1472.8,570.8L1472.9,571.9 M1467.3,567.5L1468.2,568.1L1468.0,569.7L1468.8,569.2L1470.7,569.7L1471.4,571.2L1471.1,572.2 M1471.1,572.2L1472.9,571.9 M1471.1,572.2L1469.5,572.3L1469.0,572.7L1469.4,574.2 M1472.9,571.9L1472.8,573.7L1471.7,574.2L1471.0,574.8L1470.5,575.2 M1467.3,578.2L1468.0,578.7L1468.8,578.4 M1474.4,581.5L1475.1,582.4L1476.3,582.0L1477.5,582.1L1478.4,581.3L1478.9,579.9L1480.4,579.9 M1497.9,584.9L1497.9,589.8 M1485.2,590.1L1485.9,589.8L1486.1,590.1 M1428.8,544.2L1427.6,542.0L1427.2,540.9L1427.8,539.4L1428.9,539.0L1430.5,537.7L1431.6,537.7L1433.6,539.0L1435.5,538.6L1437.0,539.1L1438.4,538.8L1437.3,537.5L1438.2,536.1L1438.2,534.9L1440.8,534.4L1443.5,533.6L1445.4,533.2L1445.7,534.7L1447.3,535.5L1448.1,535.4L1449.7,534.6L1450.0,535.5L1450.8,536.1L1452.3,538.8L1454.8,538.6L1456.1,540.2L1457.7,540.8 M1457.7,540.8L1459.2,540.2L1461.2,538.9L1463.2,539.7L1465.2,540.1L1466.0,539.1L1465.6,538.6L1466.4,537.4L1468.9,538.2L1468.9,539.1L1471.3,539.3L1473.1,539.8L1475.2,540.8L1476.9,540.2L1478.0,539.5L1479.7,540.0 M1479.7,540.0L1480.5,540.3L1482.0,539.7L1481.5,539.3L1482.7,536.7L1482.9,535.8L1484.9,535.5L1486.4,536.1L1487.8,539.5L1490.1,541.0L1490.4,542.3L1493.2,541.7L1492.7,542.9L1492.0,545.2L1490.6,546.2L1490.5,547.4L1490.1,548.0 M1490.1,548.0L1489.4,548.0L1488.1,548.4L1488.3,549.0L1487.3,548.6L1485.5,550.3 M1486.7,552.5L1487.4,552.0L1488.4,551.7 M1457.7,540.8L1458.9,541.9L1460.4,543.2L1460.4,544.9L1463.8,546.1L1464.5,547.6L1468.6,547.9L1471.0,548.8L1474.3,547.9L1476.0,546.6L1476.1,545.3L1477.4,545.5L1479.6,543.9L1482.0,543.4L1480.2,542.5L1478.9,542.1L1479.7,540.0 M1457.7,540.8L1456.5,541.6L1456.4,543.0L1454.5,542.9L1454.0,544.7L1452.3,545.3L1452.9,547.1L1452.4,548.4 M1452.4,548.4L1450.9,549.4L1449.9,549.5L1447.6,550.5L1447.5,550.9L1448.5,551.9L1448.5,553.0 M1452.4,548.4L1451.7,547.5L1447.9,547.1L1447.4,548.0L1445.6,547.8L1445.5,548.1 M1445.5,548.1L1443.8,549.7L1442.3,549.2L1441.8,548.0L1441.9,547.3L1441.0,546.6L1438.8,546.8L1436.3,544.6L1434.3,545.3L1434.3,549.1L1433.4,548.4L1432.4,548.1L1431.7,548.6 M1434.3,549.1L1435.2,549.1L1436.3,547.5L1437.3,548.2L1437.4,549.0L1438.8,549.3L1439.1,550.3L1440.5,551.4L1442.2,552.8 M1443.3,553.2L1443.2,550.7L1445.2,550.3L1445.3,549.4L1447.0,549.6L1447.6,550.5 M1445.2,550.3L1444.3,549.7L1445.5,548.1 M1443.2,550.7L1445.2,550.8L1447.5,550.9 M1390.9,555.0L1391.2,555.6L1391.5,557.5L1389.8,558.1L1388.5,559.5L1386.0,560.6L1386.0,561.8 M1386.0,561.4L1382.6,561.4 M1386.0,561.8L1386.0,562.9L1383.5,562.9L1383.5,565.0L1382.8,565.3L1382.7,566.7L1379.8,566.7 M1386.0,561.8L1388.9,563.7L1393.3,566.9L1394.8,568.0L1395.0,568.5L1395.6,568.5L1396.8,568.2L1398.1,567.0L1401.5,564.9 M1401.5,564.9L1399.9,563.9L1399.5,562.7L1399.9,561.4L1399.6,559.3L1399.3,557.7L1398.1,556.1L1398.8,554.9L1398.9,553.3 M1399.6,559.3L1400.2,558.0L1401.1,557.2L1401.1,556.7 M1388.9,563.7L1387.6,563.7L1388.3,570.5L1388.5,570.7L1385.6,571.3L1383.9,571.2L1383.4,571.8L1381.8,570.4L1380.2,570.8 M1383.4,571.8L1384.0,573.7L1382.3,573.5L1380.0,573.7 M1379.9,572.7L1381.3,572.6L1382.2,572.9L1381.3,573.0L1379.9,573.1 M1382.3,573.5L1382.3,574.2L1381.3,574.7 M1384.0,573.7L1385.8,573.8L1386.4,575.2L1386.6,575.3 M1382.6,576.2L1384.6,576.0L1384.8,576.7L1383.9,577.8 M1384.8,576.7L1386.2,577.3L1386.9,578.7L1386.9,579.7 M1386.2,577.3L1386.6,575.3L1388.4,575.2L1390.4,575.7L1390.1,577.9L1390.4,579.2 M1388.4,575.2L1389.3,573.4L1390.3,572.4L1392.1,571.7L1392.6,571.7L1394.1,573.5L1394.3,574.0L1395.2,574.2 M1390.4,575.7L1390.4,574.7L1392.4,574.7L1393.2,574.7L1394.3,574.0 M1392.5,574.7L1392.9,577.4L1393.4,578.4 M1393.2,574.7L1393.7,578.3 M1395.2,574.2L1394.5,577.1L1394.5,578.2 M1395.6,568.5L1395.6,570.2L1395.1,571.3L1392.6,571.7 M1395.2,574.2L1395.6,572.8L1397.7,573.2L1399.2,573.4L1401.7,573.1L1402.7,572.7L1404.1,570.2L1404.4,567.4L1403.7,565.3L1401.5,564.9 M1403.7,565.3L1410.4,568.1L1410.4,567.7L1411.2,567.7L1411.2,566.1L1411.2,558.1 M1411.2,566.1L1420.1,566.1 M1410.4,568.1L1410.4,571.1L1409.4,572.4L1409.2,573.4L1409.6,574.7L1408.7,575.0L1406.7,576.2L1404.0,577.4 M1404.0,577.4L1403.0,575.5L1403.7,574.8L1403.1,573.6L1402.7,572.7 M1403.1,573.6L1402.4,575.5L1401.3,577.5L1399.4,578.1L1398.9,579.4 M1404.0,577.4L1403.3,579.3L1404.5,581.4L1402.4,581.4L1400.9,581.3L1399.8,581.3 M1400.9,581.3L1400.9,582.3L1399.7,582.3 M1402.4,581.4L1403.3,582.0L1402.9,583.0L1403.3,584.1L1401.8,584.7L1400.8,585.9 M1404.5,581.4L1406.4,580.4L1406.3,579.8L1409.2,579.9L1411.4,579.1L1413.0,579.2 M1406.4,580.4L1405.8,582.8L1404.6,584.6L1403.9,586.2L1402.2,586.4L1401.6,587.3 M1413.0,579.2L1411.2,577.2L1410.1,576.4L1409.6,574.7 M1410.1,576.4L1411.9,575.5L1413.4,575.9L1415.7,575.6L1417.2,575.5L1417.8,575.9L1418.0,576.6 M1413.0,579.2L1414.5,579.7L1415.5,580.4L1416.4,580.3L1417.9,579.9L1419.3,579.6 M1419.3,579.6L1418.0,576.6L1418.1,575.0L1419.2,573.5L1419.8,572.2L1420.1,570.1L1421.3,569.3 M1419.8,572.2L1421.6,572.0L1423.0,572.4L1424.2,573.6L1423.7,574.7L1424.6,574.8L1424.8,574.3 M1424.6,574.8L1425.0,575.9L1427.6,577.0L1428.4,577.0L1426.1,579.3L1423.9,579.9L1423.8,580.1L1422.0,580.5L1420.9,580.3L1419.4,579.7L1419.3,579.6 M1423.8,580.1L1423.1,580.9L1423.1,583.7L1423.6,584.3 M1417.9,579.9L1418.3,582.2L1417.9,583.0L1417.8,583.7L1420.6,585.2L1421.8,586.5 M1415.5,580.4L1415.9,581.4L1414.6,583.4L1414.6,584.0L1415.3,583.8L1417.8,583.7 M1414.6,584.0L1414.2,585.0L1414.5,586.3L1414.6,587.9L1415.5,589.2 M1415.3,583.8L1415.5,584.8L1415.2,585.6L1414.5,586.3 M1414.2,585.0L1415.5,584.8 M1415.5,589.2L1417.1,590.1L1417.9,590.1L1418.3,591.7L1420.5,591.8L1422.8,590.9 M1401.6,587.3L1402.2,587.4L1404.9,587.4L1405.2,588.4L1407.1,588.2L1407.1,589.0L1408.8,588.5L1408.9,590.2L1409.2,591.4L1410.4,591.5 M1410.4,591.5L1411.9,592.0L1413.7,592.4L1414.5,593.1L1414.8,592.2L1413.8,591.9L1413.9,590.4L1413.9,589.4L1415.5,589.2 M1410.4,591.5L1410.4,592.8L1408.9,592.8L1408.9,595.3L1410.0,596.4 M1401.3,596.1L1403.0,596.2L1406.2,596.2L1408.5,596.6L1410.0,596.4L1411.4,596.5 M1408.2,596.9L1408.2,599.9L1407.4,599.9L1407.4,602.1L1407.4,605.1L1405.5,605.4L1404.8,605.3 M1407.4,602.1L1408.0,603.8L1409.4,603.2L1411.4,602.9L1412.5,601.7L1414.5,600.0L1413.2,598.7L1411.4,596.5L1412.7,596.6L1414.1,595.1L1415.2,594.8 M1414.5,600.0L1415.9,600.2L1416.9,598.7L1417.1,597.1L1417.2,595.7L1415.2,594.8L1415.1,594.2L1417.3,593.6L1417.2,592.0L1417.1,590.1 M1415.9,600.2L1416.4,601.9L1416.3,603.1L1417.1,603.9 M1416.3,603.1L1415.7,603.1L1415.5,604.0L1416.3,604.2L1416.5,603.8 M1412.7,606.2L1413.9,605.3L1414.5,606.3L1413.4,607.0L1412.7,606.2 M1418.3,591.7L1418.4,593.9L1419.3,595.0L1418.8,596.0L1418.2,595.3L1418.1,593.9L1417.3,593.6" fill="none" stroke="#2b2b2b" stroke-width="0.7" stroke-linejoin="round"/>
<path d="M1429.3,543.9L1430.8,543.2L1432.1,543.6L1432.2,545.1L1430.8,545.6L1430.1,546.0L1430.8,547.1L1431.8,547.8L1432.0,549.2L1432.8,549.6L1432.3,550.8L1432.8,552.8L1431.5,553.5L1430.0,552.9L1429.1,551.9L1429.4,550.1L1428.4,548.5L1427.9,547.1L1427.5,545.8L1428.2,544.5L1429.3,543.9Z" fill="#fff" stroke="#2e2e2e" stroke-width="0.6" stroke-linejoin="round"/>
</g>
<circle cx="1392.3" cy="538.1" r="7.5" fill="#f28e3c" fill-opacity="0.6"/>
<circle cx="1447.3" cy="568.3" r="8.3" fill="#f28e3c" fill-opacity="0.6"/>
</svg>

</div></body></html>
